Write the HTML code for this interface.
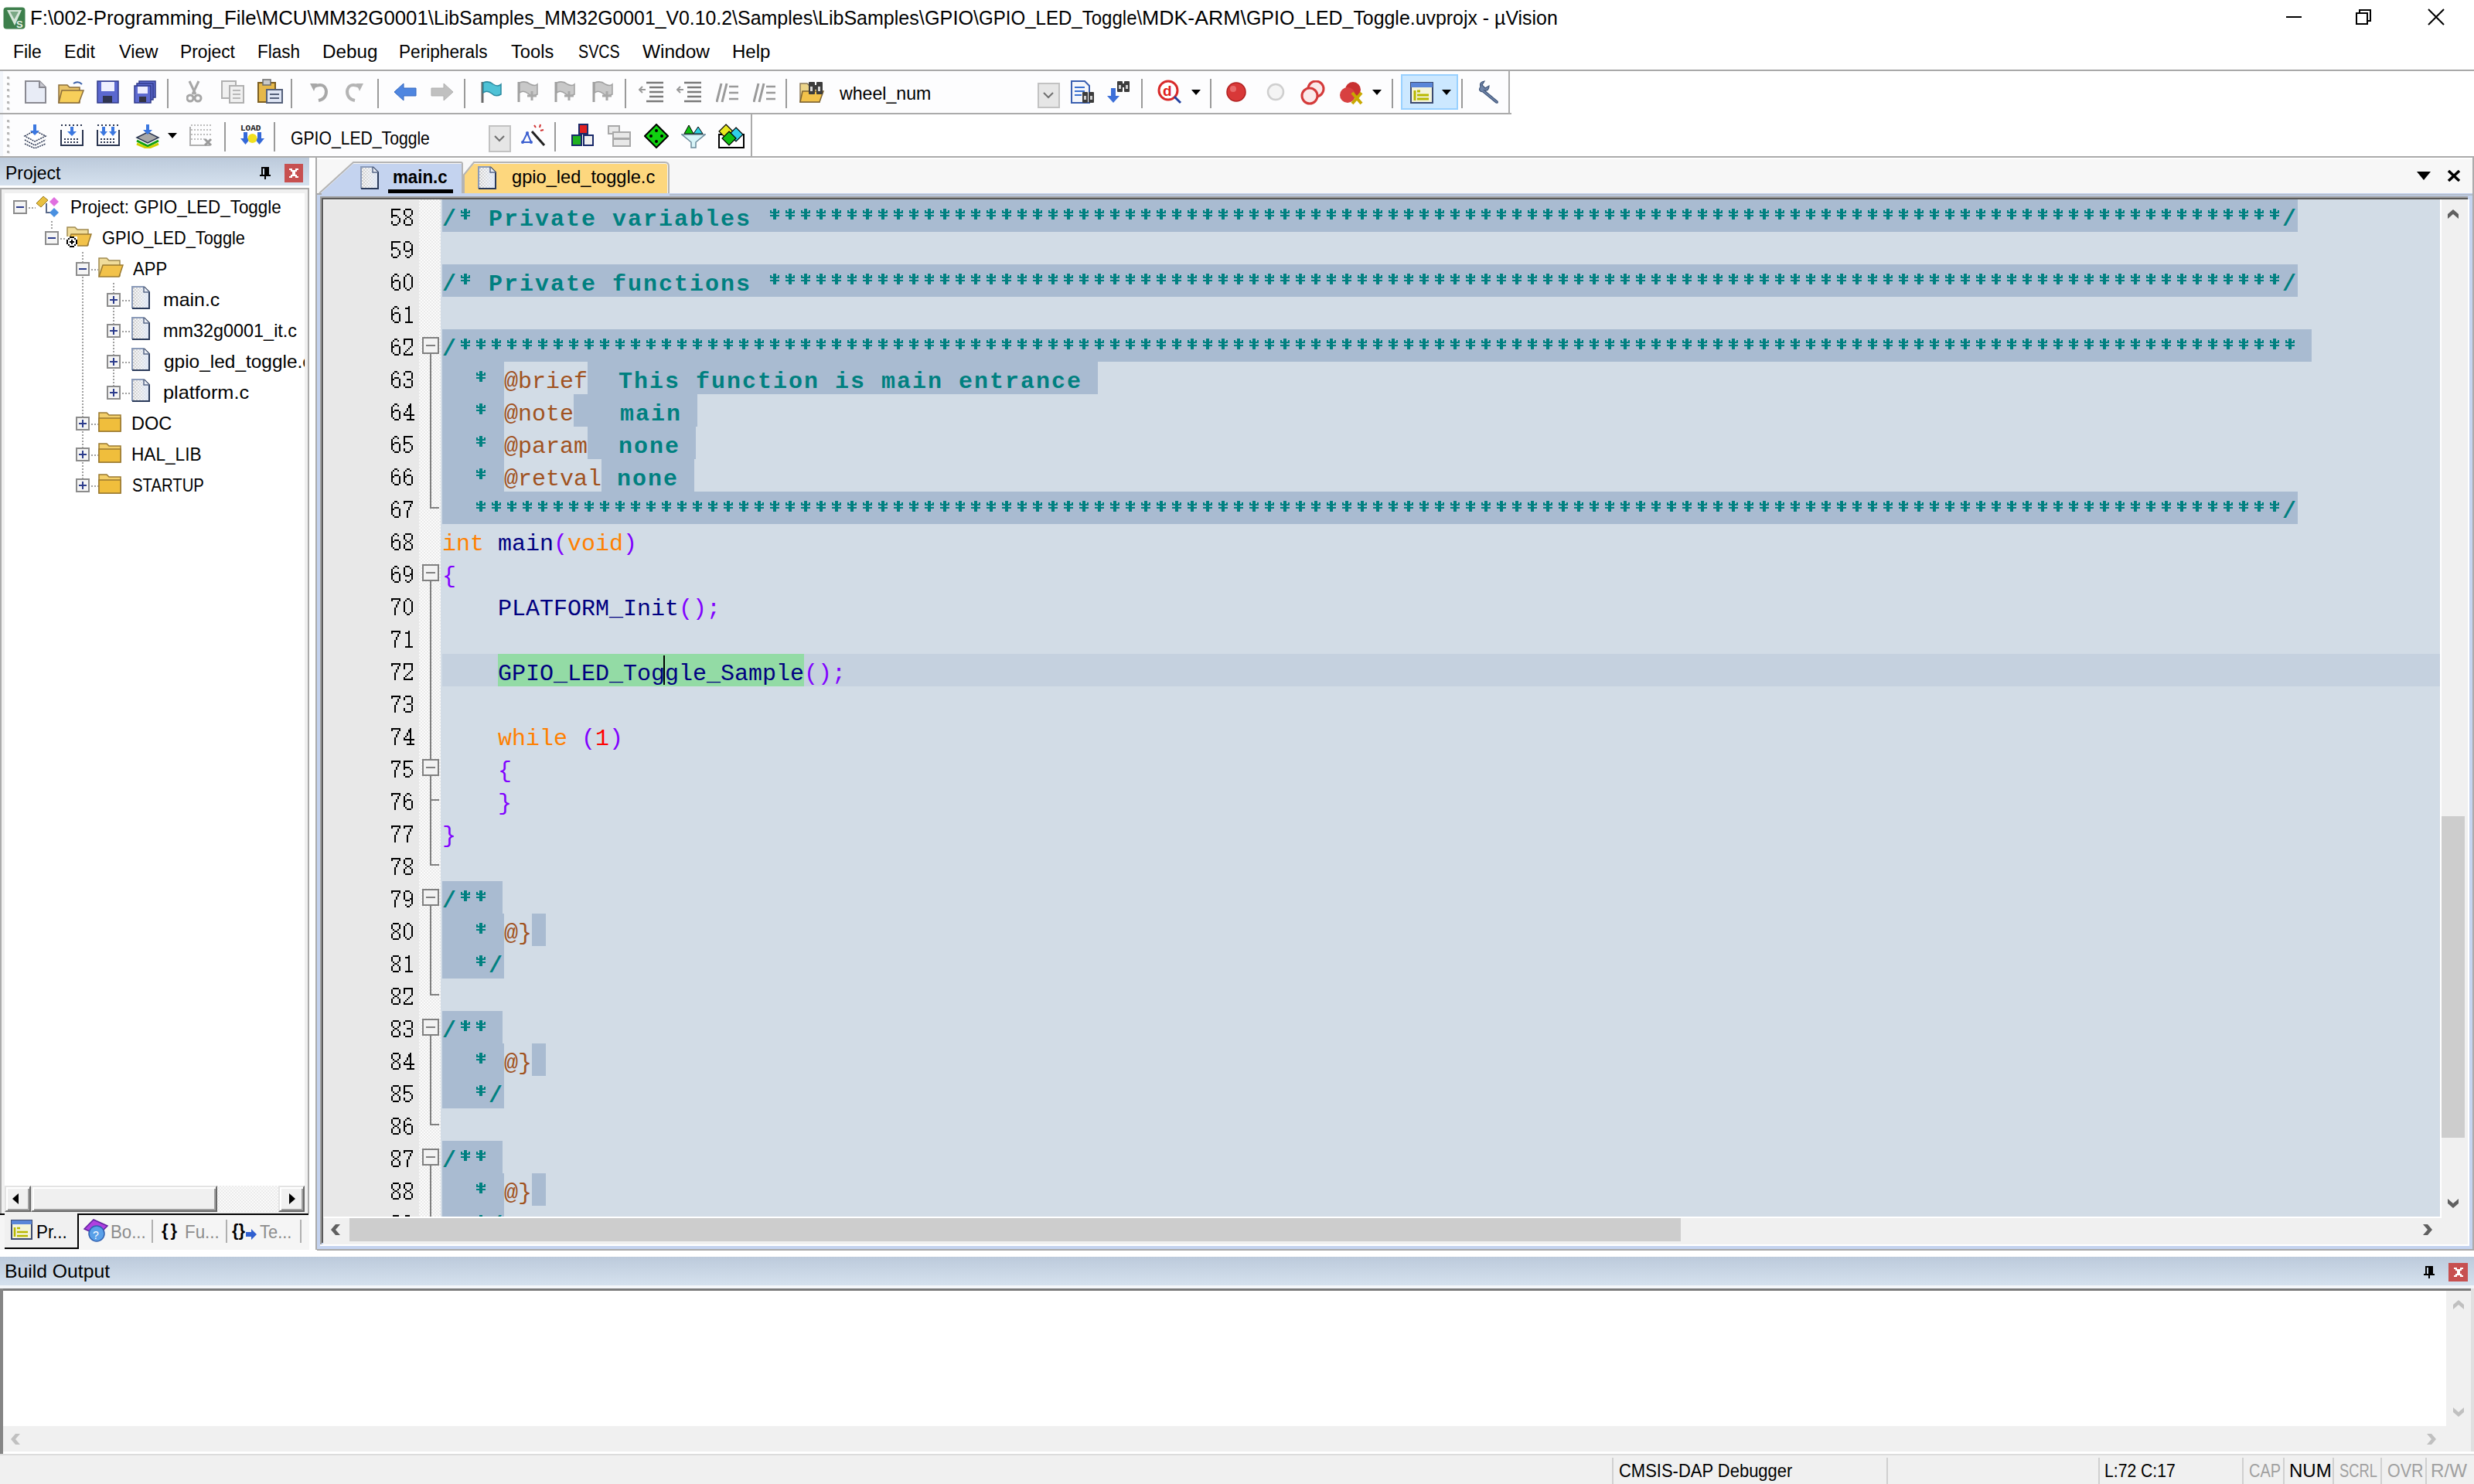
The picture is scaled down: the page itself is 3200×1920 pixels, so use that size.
<!DOCTYPE html><html><head><meta charset="utf-8"><title>uVision</title><style>
*{margin:0;padding:0;box-sizing:border-box}
html,body{width:3200px;height:1920px;overflow:hidden;background:#fff;position:relative}
.t{position:absolute;white-space:pre;font-family:'Liberation Sans',sans-serif;line-height:1}
.m{position:absolute;white-space:pre;font-family:'Liberation Mono',monospace;line-height:42px;height:42px;font-size:30px}
</style></head><body><div id="root" style="position:absolute;left:0;top:0;width:3200px;height:1920px;overflow:hidden">
<svg style="position:absolute;left:4px;top:9px;" width="29" height="29" viewBox="0 0 29 29"><rect x="0.5" y="0.5" width="28" height="28" rx="4" fill="#3d7f4c"/><path d="M5 4 L24 4 L15 24 Z" fill="#e8f2ea" opacity="0.9"/><path d="M9 6 L20 6 L14.5 16 Z" fill="#3d7f4c" opacity="0.6"/><text x="17" y="27" font-family="Liberation Sans" font-size="13" font-weight="bold" fill="#e8f2ea">S</text></svg>
<div class="t" style="left:38.94px;top:9.99px;font-size:26px;color:#000;font-weight:normal;transform:scaleX(0.9924);transform-origin:0 0;">F:\002-Programming_File\MCU\MM32G0001\</div>
<div class="t" style="left:561.02px;top:9.99px;font-size:26px;color:#000;font-weight:normal;transform:scaleX(0.9537);transform-origin:0 0;">LibSamples_MM32G0001_V0.10.2\</div>
<div class="t" style="left:953.88px;top:9.99px;font-size:26px;color:#000;font-weight:normal;transform:scaleX(0.9607);transform-origin:0 0;">Samples\</div>
<div class="t" style="left:1058.0px;top:9.99px;font-size:26px;color:#000;font-weight:normal;transform:scaleX(0.9627);transform-origin:0 0;">LibSamples\</div>
<div class="t" style="left:1195.74px;top:9.99px;font-size:26px;color:#000;font-weight:normal;transform:scaleX(0.9691);transform-origin:0 0;">GPIO\</div>
<div class="t" style="left:1265.8px;top:9.99px;font-size:26px;color:#000;font-weight:normal;transform:scaleX(0.9252);transform-origin:0 0;">GPIO_LED_Toggle\</div>
<div class="t" style="left:1476.87px;top:9.99px;font-size:26px;color:#000;font-weight:normal;transform:scaleX(1.0256);transform-origin:0 0;">MDK-ARM\</div>
<div class="t" style="left:1611.76px;top:9.99px;font-size:26px;color:#000;font-weight:normal;transform:scaleX(0.9576);transform-origin:0 0;">GPIO_LED_Toggle.uvprojx - µVision</div>
<div style="position:absolute;left:2957px;top:21px;width:20px;height:2px;background:#000"></div>
<svg style="position:absolute;left:3046px;top:11px;" width="24" height="22" viewBox="0 0 24 22"><rect x="2" y="6" width="14" height="14" fill="none" stroke="#000" stroke-width="2"/><path d="M6 6 V2 H20 V16 H16" fill="none" stroke="#000" stroke-width="2"/></svg>
<svg style="position:absolute;left:3139px;top:11px;" width="24" height="22" viewBox="0 0 24 22"><path d="M2 1 L22 21 M22 1 L2 21" stroke="#000" stroke-width="2"/></svg>
<div class="t" style="left:16.97px;top:56.28px;font-size:23.3px;color:#000;font-weight:normal;transform:scaleX(0.9793);transform-origin:0 0;">File</div>
<div class="t" style="left:83.15px;top:56.28px;font-size:23.3px;color:#000;font-weight:normal;transform:scaleX(0.9945);transform-origin:0 0;">Edit</div>
<div class="t" style="left:153.6px;top:56.28px;font-size:23.3px;color:#000;font-weight:normal;transform:scaleX(1.0081);transform-origin:0 0;">View</div>
<div class="t" style="left:233.18px;top:56.28px;font-size:23.3px;color:#000;font-weight:normal;transform:scaleX(0.9774);transform-origin:0 0;">Project</div>
<div class="t" style="left:333.2px;top:56.28px;font-size:23.3px;color:#000;font-weight:normal;transform:scaleX(0.9682);transform-origin:0 0;">Flash</div>
<div class="t" style="left:417.06px;top:56.28px;font-size:23.3px;color:#000;font-weight:normal;transform:scaleX(1.0404);transform-origin:0 0;">Debug</div>
<div class="t" style="left:516.19px;top:56.28px;font-size:23.3px;color:#000;font-weight:normal;transform:scaleX(0.9721);transform-origin:0 0;">Peripherals</div>
<div class="t" style="left:660.53px;top:56.28px;font-size:23.3px;color:#000;font-weight:normal;transform:scaleX(1.0165);transform-origin:0 0;">Tools</div>
<div class="t" style="left:747.71px;top:56.28px;font-size:23.3px;color:#000;font-weight:normal;transform:scaleX(0.8470);transform-origin:0 0;">SVCS</div>
<div class="t" style="left:830.7px;top:56.28px;font-size:23.3px;color:#000;font-weight:normal;transform:scaleX(1.0488);transform-origin:0 0;">Window</div>
<div class="t" style="left:946.78px;top:56.28px;font-size:23.3px;color:#000;font-weight:normal;transform:scaleX(1.0314);transform-origin:0 0;">Help</div>
<div style="position:absolute;left:0px;top:90px;width:3200px;height:2px;background:#a9a9a9"></div>
<div style="position:absolute;left:0px;top:92px;width:1953px;height:55px;background:#fdfdfe;border-right:2px solid #ababab"></div>
<div style="position:absolute;left:0px;top:92px;width:4px;height:55px;background:#f2f5fa"></div>
<div style="position:absolute;left:0px;top:146px;width:1955px;height:2px;background:#ababab"></div>
<div style="position:absolute;left:0px;top:148px;width:973px;height:56px;background:#fdfdfe;border-right:2px solid #ababab"></div>
<div style="position:absolute;left:0px;top:148px;width:4px;height:56px;background:#f2f5fa"></div>
<div style="position:absolute;left:0px;top:202px;width:3200px;height:2px;background:#ababab"></div>
<div style="position:absolute;left:9px;top:99px;width:3px;height:3px;background:#b8b8b8;box-shadow:1px 1px #e8e8e8"></div>
<div style="position:absolute;left:9px;top:107px;width:3px;height:3px;background:#b8b8b8;box-shadow:1px 1px #e8e8e8"></div>
<div style="position:absolute;left:9px;top:115px;width:3px;height:3px;background:#b8b8b8;box-shadow:1px 1px #e8e8e8"></div>
<div style="position:absolute;left:9px;top:123px;width:3px;height:3px;background:#b8b8b8;box-shadow:1px 1px #e8e8e8"></div>
<div style="position:absolute;left:9px;top:131px;width:3px;height:3px;background:#b8b8b8;box-shadow:1px 1px #e8e8e8"></div>
<div style="position:absolute;left:9px;top:139px;width:3px;height:3px;background:#b8b8b8;box-shadow:1px 1px #e8e8e8"></div>
<div style="position:absolute;left:9px;top:155px;width:3px;height:3px;background:#b8b8b8;box-shadow:1px 1px #e8e8e8"></div>
<div style="position:absolute;left:9px;top:163px;width:3px;height:3px;background:#b8b8b8;box-shadow:1px 1px #e8e8e8"></div>
<div style="position:absolute;left:9px;top:171px;width:3px;height:3px;background:#b8b8b8;box-shadow:1px 1px #e8e8e8"></div>
<div style="position:absolute;left:9px;top:179px;width:3px;height:3px;background:#b8b8b8;box-shadow:1px 1px #e8e8e8"></div>
<div style="position:absolute;left:9px;top:187px;width:3px;height:3px;background:#b8b8b8;box-shadow:1px 1px #e8e8e8"></div>
<div style="position:absolute;left:9px;top:195px;width:3px;height:3px;background:#b8b8b8;box-shadow:1px 1px #e8e8e8"></div>
<svg style="position:absolute;left:32px;top:104px;" width="28" height="30" viewBox="0 0 28 30"><path d="M1 1 H19 L27 9 V29 H1 Z" fill="#e8ecf6" stroke="#8a8a92" stroke-width="2"/><path d="M19 1 V9 H27" fill="#c8c8d0" stroke="#8a8a92" stroke-width="2"/></svg>
<svg style="position:absolute;left:75px;top:104px;" width="34" height="30" viewBox="0 0 34 30"><path d="M1 6 H12 L15 9 H28 V29 H1 Z" fill="#e9c46a" stroke="#8a6d3b" stroke-width="1.5"/><path d="M5 13 H33 L27 29 H1 Z" fill="#f7cf5a" stroke="#8a6d3b" stroke-width="1.5"/><path d="M20 4 Q26 0 31 5" fill="none" stroke="#3a5fa8" stroke-width="2"/></svg>
<svg style="position:absolute;left:125px;top:104px;" width="30" height="30" viewBox="0 0 30 30"><rect x="1" y="1" width="27" height="28" fill="#5b68cf" stroke="#2f3a8a" stroke-width="1.5"/><rect x="6" y="2" width="17" height="12" fill="#eef0ff"/><rect x="8" y="20" width="12" height="9" fill="#2f3450"/></svg>
<svg style="position:absolute;left:173px;top:104px;" width="30" height="30" viewBox="0 0 30 30"><rect x="7" y="1" width="21" height="21" fill="#5d6ad0" stroke="#2f3a8a" stroke-width="1.5"/><rect x="4" y="4" width="21" height="21" fill="#5d6ad0" stroke="#2f3a8a" stroke-width="1.5"/><rect x="1" y="7" width="21" height="22" fill="#5d6ad0" stroke="#2f3a8a" stroke-width="1.5"/><rect x="5" y="8" width="13" height="9" fill="#eef"/><rect x="7" y="21" width="9" height="7" fill="#334"/></svg>
<div style="position:absolute;left:216px;top:102px;width:2px;height:38px;background:#9a9a9a"></div>
<svg style="position:absolute;left:241px;top:104px;" width="22" height="30" viewBox="0 0 22 30"><path d="M4 1 L12 18 M16 1 L8 18" stroke="#a6a6a6" stroke-width="3"/><circle cx="5" cy="23" r="4" fill="none" stroke="#a6a6a6" stroke-width="3"/><circle cx="15" cy="23" r="4" fill="none" stroke="#a6a6a6" stroke-width="3"/></svg>
<svg style="position:absolute;left:286px;top:104px;" width="32" height="30" viewBox="0 0 32 30"><rect x="1" y="1" width="18" height="22" fill="#f0f0f0" stroke="#b0b0b0" stroke-width="2"/><rect x="11" y="7" width="18" height="22" fill="#f0f0f0" stroke="#b0b0b0" stroke-width="2"/><path d="M15 13 H25 M15 18 H25 M15 23 H25" stroke="#b8b8b8" stroke-width="2"/></svg>
<svg style="position:absolute;left:332px;top:102px;" width="34" height="32" viewBox="0 0 34 32"><rect x="2" y="5" width="22" height="25" fill="#e6b84a" stroke="#7d5f22" stroke-width="2"/><rect x="8" y="1" width="10" height="7" fill="#c9c9c9" stroke="#6c6c6c" stroke-width="1.5"/><rect x="13" y="14" width="20" height="17" fill="#dfe6f5" stroke="#55607a" stroke-width="2"/><path d="M17 20 H29 M17 25 H29" stroke="#55607a" stroke-width="2"/></svg>
<div style="position:absolute;left:376px;top:102px;width:2px;height:38px;background:#9a9a9a"></div>
<svg style="position:absolute;left:400px;top:104px;" width="26" height="30" viewBox="0 0 26 30"><path d="M6 8 Q20 2 22 14 Q22 24 12 26" fill="none" stroke="#a8a8a8" stroke-width="4"/><path d="M1 4 L10 4 L6 14 Z" fill="#a8a8a8"/></svg>
<svg style="position:absolute;left:447px;top:104px;" width="26" height="30" viewBox="0 0 26 30"><path d="M18 8 Q4 2 2 14 Q2 24 12 26" fill="none" stroke="#b4b4b4" stroke-width="4"/><path d="M23 4 L14 4 L18 14 Z" fill="#b4b4b4"/></svg>
<div style="position:absolute;left:488px;top:102px;width:2px;height:38px;background:#9a9a9a"></div>
<svg style="position:absolute;left:509px;top:107px;" width="30" height="24" viewBox="0 0 30 24"><path d="M1 12 L13 1 V7 H29 V17 H13 V23 Z" fill="#4f86e0" stroke="#3468c0" stroke-width="1"/></svg>
<svg style="position:absolute;left:557px;top:107px;" width="30" height="24" viewBox="0 0 30 24"><path d="M29 12 L17 1 V7 H1 V17 H17 V23 Z" fill="#c0c0c0" stroke="#b0b0b0" stroke-width="1"/></svg>
<div style="position:absolute;left:600px;top:102px;width:2px;height:38px;background:#9a9a9a"></div>
<svg style="position:absolute;left:620px;top:104px;" width="30" height="30" viewBox="0 0 30 30"><path d="M4 2 L4 29" stroke="#6a6a6a" stroke-width="3"/><path d="M5 3 Q12 0 18 5 Q24 9 28 5 V18 Q21 22 16 17 Q10 12 5 16 Z" fill="#4fc2d6" stroke="#2b8aa0" stroke-width="1.5"/></svg>
<svg style="position:absolute;left:668px;top:104px;" width="32" height="30" viewBox="0 0 32 30"><path d="M3 2 L3 28" stroke="#a0a0a0" stroke-width="3"/><path d="M4 3 Q12 0 18 5 Q24 8 27 5 V18 Q20 22 15 17 Q9 12 4 16 Z" fill="#c8c8c8" stroke="#a0a0a0" stroke-width="1.5"/><path d="M14 20 H26 M20 14 V26" stroke="#a8a8a8" stroke-width="3"/></svg>
<svg style="position:absolute;left:716px;top:104px;" width="32" height="30" viewBox="0 0 32 30"><path d="M3 2 L3 28" stroke="#a0a0a0" stroke-width="3"/><path d="M4 3 Q12 0 18 5 Q24 8 27 5 V18 Q20 22 15 17 Q9 12 4 16 Z" fill="#c8c8c8" stroke="#a0a0a0" stroke-width="1.5"/><path d="M14 20 H26 M20 14 V26" stroke="#a8a8a8" stroke-width="3"/></svg>
<svg style="position:absolute;left:765px;top:104px;" width="32" height="30" viewBox="0 0 32 30"><path d="M3 2 L3 28" stroke="#a0a0a0" stroke-width="3"/><path d="M4 3 Q12 0 18 5 Q24 8 27 5 V18 Q20 22 15 17 Q9 12 4 16 Z" fill="#c8c8c8" stroke="#a0a0a0" stroke-width="1.5"/><path d="M14 20 H26 M20 14 V26" stroke="#a8a8a8" stroke-width="3"/></svg>
<div style="position:absolute;left:808px;top:102px;width:2px;height:38px;background:#9a9a9a"></div>
<svg style="position:absolute;left:826px;top:104px;" width="34" height="30" viewBox="0 0 34 30"><path d="M10 3 H32 M14 9 H32 M14 15 H32 M14 21 H32 M10 27 H32" stroke="#7a7a7a" stroke-width="2.5"/><path d="M1 12 L9 12 M5 8 L1 12 L5 16" stroke="#9a9a9a" stroke-width="2" fill="none"/></svg>
<svg style="position:absolute;left:875px;top:104px;" width="34" height="30" viewBox="0 0 34 30"><path d="M10 3 H32 M14 9 H32 M14 15 H32 M14 21 H32 M10 27 H32" stroke="#7a7a7a" stroke-width="2.5"/><path d="M1 12 L9 12 M5 8 L1 12 L5 16" stroke="#9a9a9a" stroke-width="2" fill="none"/></svg>
<svg style="position:absolute;left:926px;top:104px;" width="30" height="30" viewBox="0 0 30 30"><path d="M7 4 L1 28 M14 4 L8 28" stroke="#9a9a9a" stroke-width="3"/><path d="M17 8 H29 M17 16 H29 M17 24 H29" stroke="#9a9a9a" stroke-width="2.5"/></svg>
<svg style="position:absolute;left:974px;top:104px;" width="32" height="30" viewBox="0 0 32 30"><path d="M7 4 L1 28 M14 4 L8 28" stroke="#9a9a9a" stroke-width="3"/><path d="M17 8 H29 M17 16 H29 M17 24 H29" stroke="#9a9a9a" stroke-width="2.5"/></svg>
<div style="position:absolute;left:1016px;top:102px;width:2px;height:38px;background:#9a9a9a"></div>
<svg style="position:absolute;left:1034px;top:104px;" width="34" height="30" viewBox="0 0 34 30"><path d="M1 4 H10 L13 7 H26 V28 H1 Z" fill="#ecd58a" stroke="#8a7a5a" stroke-width="1.5"/><path d="M4 14 H31 L26 28 H1 Z" fill="#f2c24a" stroke="#7d6330" stroke-width="1.5"/><rect x="12" y="2" width="8" height="16" rx="1" fill="#3c3c3c"/><rect x="22" y="2" width="8" height="16" rx="1" fill="#3c3c3c"/><rect x="18" y="6" width="6" height="6" fill="#3c3c3c"/><rect x="14" y="8" width="3" height="6" fill="#d8d8d8"/><rect x="24" y="8" width="3" height="6" fill="#d8d8d8"/></svg>
<div class="t" style="left:1086.12px;top:109.35px;font-size:23.8px;color:#000;font-weight:normal;transform:scaleX(0.9725);transform-origin:0 0;">wheel_num</div>
<div style="position:absolute;left:1342px;top:107px;width:29px;height:33px;background:#e6e6e6;border:2px solid #c2c2c2"></div>
<svg style="position:absolute;left:1348px;top:118px;" width="16" height="10" viewBox="0 0 16 10"><path d="M2 2 L8 8 L14 2" fill="none" stroke="#707070" stroke-width="2"/></svg>
<svg style="position:absolute;left:1385px;top:104px;" width="32" height="30" viewBox="0 0 32 30"><path d="M1 1 H18 L24 7 V29 H1 Z" fill="#f4f6fb" stroke="#3a5fb0" stroke-width="2"/><path d="M5 9 H18 M5 14 H18 M5 19 H14" stroke="#3a70d0" stroke-width="2"/><rect x="15" y="15" width="7" height="14" rx="1" fill="#3c3c3c"/><rect x="23" y="15" width="7" height="14" rx="1" fill="#3c3c3c"/><rect x="17" y="20" width="3" height="5" fill="#d0d0d0"/><rect x="25" y="20" width="3" height="5" fill="#d0d0d0"/></svg>
<svg style="position:absolute;left:1431px;top:104px;" width="32" height="30" viewBox="0 0 32 30"><path d="M6 10 V20 H1 L9 29 L17 20 H12 V10 Z" fill="#3c6fd8"/><rect x="14" y="1" width="7" height="14" rx="1" fill="#3c3c3c"/><rect x="23" y="1" width="7" height="14" rx="1" fill="#3c3c3c"/><rect x="19" y="4" width="5" height="5" fill="#3c3c3c"/><rect x="16" y="6" width="3" height="5" fill="#d0d0d0"/><rect x="25" y="6" width="3" height="5" fill="#d0d0d0"/></svg>
<div style="position:absolute;left:1476px;top:102px;width:2px;height:38px;background:#9a9a9a"></div>
<svg style="position:absolute;left:1497px;top:103px;" width="34" height="32" viewBox="0 0 34 32"><circle cx="14" cy="14" r="12" fill="#fff" stroke="#d82a2a" stroke-width="3"/><text x="7" y="21" font-family="Liberation Sans" font-weight="bold" font-size="19" fill="#e02020">d</text><path d="M22 22 L30 30" stroke="#2040a0" stroke-width="3"/></svg>
<svg style="position:absolute;left:1541px;top:116px;" width="12" height="8" viewBox="0 0 12 8"><path d="M0 0 H12 L6 7 Z" fill="#000"/></svg>
<div style="position:absolute;left:1565px;top:102px;width:2px;height:38px;background:#9a9a9a"></div>
<svg style="position:absolute;left:1585px;top:105px;" width="30" height="28" viewBox="0 0 30 28"><circle cx="14" cy="14" r="12" fill="#d83838" stroke="#b02020" stroke-width="1.5"/><circle cx="10" cy="10" r="4" fill="#f08080" opacity="0.7"/></svg>
<svg style="position:absolute;left:1638px;top:107px;" width="26" height="26" viewBox="0 0 26 26"><circle cx="12" cy="12" r="10" fill="#f4f4f4" stroke="#cfcfcf" stroke-width="2.5"/></svg>
<svg style="position:absolute;left:1682px;top:104px;" width="34" height="32" viewBox="0 0 34 32"><circle cx="20" cy="11" r="10" fill="#fbeaea" stroke="#d43a3a" stroke-width="3"/><circle cx="12" cy="20" r="10" fill="#fbeaea" stroke="#d43a3a" stroke-width="3"/></svg>
<svg style="position:absolute;left:1732px;top:104px;" width="34" height="32" viewBox="0 0 34 32"><circle cx="18" cy="12" r="10" fill="#c83030"/><circle cx="11" cy="19" r="10" fill="#d84040"/><path d="M17 16 L29 30 M29 16 L17 30" stroke="#c8a800" stroke-width="4"/></svg>
<svg style="position:absolute;left:1775px;top:116px;" width="12" height="8" viewBox="0 0 12 8"><path d="M0 0 H12 L6 7 Z" fill="#000"/></svg>
<div style="position:absolute;left:1800px;top:102px;width:2px;height:38px;background:#9a9a9a"></div>
<div style="position:absolute;left:1812px;top:96px;width:74px;height:46px;background:#cce8ff;border:2px solid #99d1ff"></div>
<svg style="position:absolute;left:1824px;top:106px;" width="30" height="28" viewBox="0 0 30 28"><rect x="1" y="1" width="28" height="26" fill="#f4f4dc" stroke="#3c4a70" stroke-width="2"/><rect x="1" y="1" width="28" height="6" fill="#5a86d8"/><path d="M6 11 V24 M9 12 H13 M9 17 H24 M9 22 H24" stroke="#b8b800" stroke-width="3"/></svg>
<svg style="position:absolute;left:1865px;top:116px;" width="12" height="8" viewBox="0 0 12 8"><path d="M0 0 H12 L6 7 Z" fill="#000"/></svg>
<div style="position:absolute;left:1890px;top:102px;width:2px;height:38px;background:#9a9a9a"></div>
<svg style="position:absolute;left:1911px;top:104px;" width="32" height="30" viewBox="0 0 32 30"><path d="M4 8 Q2 2 9 1 L6 6 L10 10 L15 7 Q15 14 9 13 L26 27 Q27 30 24 29 L7 15 Q0 14 4 8 Z" fill="#6f84a8" stroke="#3e5478" stroke-width="1.2"/></svg>
<svg style="position:absolute;left:29px;top:160px;" width="32" height="32" viewBox="0 0 32 32"><path d="M3 16 L16 9 L30 16 L16 23 Z" fill="#fff" stroke="#2a3550" stroke-width="1.5" stroke-dasharray="2 1"/><path d="M3 21 L16 28 L30 21" fill="none" stroke="#2a3550" stroke-width="1.5" stroke-dasharray="2 1"/><path d="M3 26 L16 32 L30 26" fill="none" stroke="#2a3550" stroke-width="1.5" stroke-dasharray="2 1"/><path d="M14 1 H18 V9 H22 L16 15 L10 9 H14 Z" fill="#3c78e0"/></svg>
<svg style="position:absolute;left:77px;top:160px;" width="32" height="30" viewBox="0 0 32 30"><path d="M2 2 H30" stroke="#2a3550" stroke-width="2" stroke-dasharray="2 3"/><path d="M2 8 V28 H30 V8" fill="none" stroke="#2a3550" stroke-width="2"/><path d="M6 20 H26 M6 24 H26" stroke="#2a3550" stroke-width="2" stroke-dasharray="2 2"/><path d="M14 4 H18 V10 H22 L16 16 L10 10 H14 Z" fill="#3c78e0"/></svg>
<svg style="position:absolute;left:124px;top:160px;" width="32" height="30" viewBox="0 0 32 30"><path d="M2 2 H30" stroke="#2a3550" stroke-width="2" stroke-dasharray="2 3"/><path d="M2 8 V28 H30 V8" fill="none" stroke="#2a3550" stroke-width="2"/><path d="M6 20 H26 M6 24 H26" stroke="#2a3550" stroke-width="2" stroke-dasharray="2 2"/><path d="M8 4 H12 V10 H15 L10 16 L5 10 H8 Z M20 4 H24 V10 H27 L22 16 L17 10 H20 Z" fill="#3c78e0"/></svg>
<svg style="position:absolute;left:175px;top:160px;" width="32" height="32" viewBox="0 0 32 32"><path d="M2 18 L16 11 L30 18 L16 25 Z" fill="#a8a8a8" stroke="#2a3550" stroke-width="1.5"/><path d="M2 22 L16 29 L30 22" fill="none" stroke="#10a010" stroke-width="3"/><path d="M2 26 L16 32 L30 26" fill="none" stroke="#d0d000" stroke-width="3"/><path d="M14 1 H18 V8 H22 L16 14 L10 8 H14 Z" fill="#3c78e0"/></svg>
<svg style="position:absolute;left:217px;top:172px;" width="12" height="8" viewBox="0 0 12 8"><path d="M0 0 H12 L6 7 Z" fill="#000"/></svg>
<svg style="position:absolute;left:245px;top:160px;" width="32" height="30" viewBox="0 0 32 30"><path d="M2 2 H30 M2 8 H30 M2 14 H30 M2 20 H22" stroke="#bdbdbd" stroke-width="2" stroke-dasharray="2 2"/><path d="M1 4 V28 H26" fill="none" stroke="#b0b0b0" stroke-width="2"/><path d="M20 20 L28 28 M28 20 L20 28" stroke="#9a9a9a" stroke-width="3"/></svg>
<div style="position:absolute;left:290px;top:158px;width:2px;height:38px;background:#9a9a9a"></div>
<svg style="position:absolute;left:310px;top:159px;" width="34" height="32" viewBox="0 0 34 32"><text x="1" y="10" font-family="Liberation Mono" font-weight="bold" font-size="11" fill="#202020">LOAD</text><path d="M5 12 H10 V20 H14 L7.5 28 L1 20 H5 Z M23 12 H28 V20 H32 L25.5 28 L19 20 H23 Z" fill="#3468d8"/><circle cx="16.5" cy="20" r="6" fill="#f0e020"/></svg>
<div style="position:absolute;left:354px;top:158px;width:2px;height:38px;background:#9a9a9a"></div>
<div class="t" style="left:375.94px;top:167.35px;font-size:23.8px;color:#000;font-weight:normal;transform:scaleX(0.8888);transform-origin:0 0;">GPIO_LED_Toggle</div>
<div style="position:absolute;left:632px;top:162px;width:29px;height:35px;background:#e6e6e6;border:2px solid #c2c2c2"></div>
<svg style="position:absolute;left:638px;top:174px;" width="16" height="10" viewBox="0 0 16 10"><path d="M2 2 L8 8 L14 2" fill="none" stroke="#707070" stroke-width="2"/></svg>
<svg style="position:absolute;left:673px;top:160px;" width="34" height="30" viewBox="0 0 34 30"><path d="M15 10 L31 28" stroke="#202020" stroke-width="3"/><path d="M9 12 L3 24 M9 12 L14 24 M3 24 H14" stroke="#3c60d0" stroke-width="2"/><circle cx="9" cy="12" r="2" fill="#3c60d0"/><circle cx="3" cy="24" r="2" fill="#3c60d0"/><circle cx="14" cy="24" r="2" fill="#3c60d0"/><path d="M18 2 L20 5 M26 1 L25 5 M30 8 L26 9" stroke="#d03030" stroke-width="2"/></svg>
<div style="position:absolute;left:717px;top:158px;width:2px;height:38px;background:#9a9a9a"></div>
<svg style="position:absolute;left:739px;top:160px;" width="30" height="30" viewBox="0 0 30 30"><rect x="10" y="1" width="11" height="12" fill="#e02020" stroke="#1a2a6a" stroke-width="2"/><rect x="1" y="15" width="12" height="13" fill="#20b020" stroke="#1a2a6a" stroke-width="2"/><rect x="16" y="15" width="12" height="13" fill="#f0f0f0" stroke="#1a2a6a" stroke-width="2"/></svg>
<svg style="position:absolute;left:785px;top:162px;" width="32" height="28" viewBox="0 0 32 28"><rect x="2" y="1" width="14" height="10" fill="#e8e8e8" stroke="#a8a8a8" stroke-width="2"/><rect x="8" y="9" width="22" height="8" fill="#e8e8e8" stroke="#a8a8a8" stroke-width="2"/><rect x="8" y="18" width="22" height="9" fill="#e8e8e8" stroke="#a8a8a8" stroke-width="2"/></svg>
<svg style="position:absolute;left:833px;top:160px;" width="32" height="32" viewBox="0 0 32 32"><path d="M16 1 L31 16 L16 31 L1 16 Z" fill="#10d010" stroke="#000" stroke-width="2"/><circle cx="16" cy="9" r="2" fill="#000"/><circle cx="9" cy="16" r="2" fill="#000"/><circle cx="23" cy="16" r="2" fill="#000"/><circle cx="16" cy="23" r="2" fill="#000"/></svg>
<svg style="position:absolute;left:881px;top:160px;" width="32" height="32" viewBox="0 0 32 32"><path d="M1 14 H31 L19 24 V31 H13 V24 Z" fill="#d8f4f8" stroke="#6a8a9a" stroke-width="1.5"/><path d="M4 13 L10 2 L16 13 Z" fill="#10c010" stroke="#000" stroke-width="1"/><path d="M16 13 L22 4 L28 13 Z" fill="#30d0e0" stroke="#000" stroke-width="1"/></svg>
<svg style="position:absolute;left:929px;top:160px;" width="34" height="32" viewBox="0 0 34 32"><rect x="1" y="14" width="32" height="17" fill="#fff" stroke="#000" stroke-width="2"/><path d="M10 1 L19 10 L10 19 L1 10 Z" fill="#e8e820" stroke="#000" stroke-width="1.2"/><path d="M23 5 L32 14 L23 23 L14 14 Z" fill="#30d0e8" stroke="#000" stroke-width="1.2"/><path d="M14 10 L23 19 L14 28 L5 19 Z" fill="#10c010" stroke="#000" stroke-width="1.2"/></svg>
<div style="position:absolute;left:0;top:204px;width:400px;height:36px;background:linear-gradient(#bccadb,#d5e1ee)"></div>
<div class="t" style="left:6.57px;top:211.85px;font-size:23.8px;color:#000;font-weight:normal;transform:scaleX(0.9638);transform-origin:0 0;">Project</div>
<svg style="position:absolute;left:336px;top:216px;" width="14" height="16" viewBox="0 0 14 16"><path d="M2 0 H12 V10 H2 Z M4 2 V10 H6 V2 Z" fill="#000" fill-rule="evenodd"/><rect x="0" y="10" width="14" height="2" fill="#000"/><rect x="6" y="12" width="2" height="4" fill="#000"/></svg>
<div style="position:absolute;left:368px;top:212px;width:24px;height:24px;background:#c75050"></div>
<svg style="position:absolute;left:368px;top:212px;" width="24" height="24" viewBox="0 0 24 24"><path d="M6 6 H10 V8 H14 V6 H18 V8 H16 V10 H14 V14 H16 V16 H18 V18 H14 V16 H10 V18 H6 V16 H8 V14 H10 V10 H8 V8 H6 Z" fill="#fff"/></svg>
<div style="position:absolute;left:400px;top:204px;width:10px;height:1413px;background:#fff"></div>
<div style="position:absolute;left:0px;top:243px;width:400px;height:1328px;background:#ababab"></div>
<div style="position:absolute;left:2px;top:245px;width:396px;height:1326px;background:#f0f0f0"></div>
<div style="position:absolute;left:6px;top:250px;width:388px;height:1285px;background:#fff"></div>
<div style="position:absolute;left:0;top:0;width:3200px;height:1920px;clip-path:inset(250px 2806px 385px 6px)">
<svg style="position:absolute;left:17px;top:258.5px;" width="18" height="18" viewBox="0 0 18 18"><rect x="1" y="1" width="16" height="16" fill="#f4f4f4" stroke="#8c8c8c" stroke-width="2"/><path d="M4 9 H14" stroke="#2c3c8c" stroke-width="2"/></svg>
<div style="position:absolute;left:37px;top:267.5px;width:9px;height:2px;background:repeating-linear-gradient(90deg,#a0a0a0 0 2px,transparent 2px 4px)"></div>
<svg style="position:absolute;left:46px;top:252.5px;" width="32" height="30" viewBox="0 0 32 30"><path d="M1 10 L10 1 L16 6 L7 15 Z" fill="#e8c040" stroke="#9a7a20" stroke-width="1"/><path d="M14 10 V22 H20" fill="none" stroke="#5a6a8a" stroke-width="2"/><path d="M24 2 L30 8 L24 14 L18 8 Z" fill="#e070e0"/><path d="M24 16 L30 22 L24 28 L18 22 Z" fill="#4a90e0"/></svg>
<div class="t" style="left:90.81px;top:255.85px;font-size:23.8px;color:#000;font-weight:normal;transform:scaleX(0.9415);transform-origin:0 0;">Project: GPIO_LED_Toggle</div>
<div style="position:absolute;left:66px;top:286px;width:2px;height:12px;background:repeating-linear-gradient(180deg,#a0a0a0 0 2px,transparent 2px 4px)"></div>
<svg style="position:absolute;left:58px;top:298.5px;" width="18" height="18" viewBox="0 0 18 18"><rect x="1" y="1" width="16" height="16" fill="#f4f4f4" stroke="#8c8c8c" stroke-width="2"/><path d="M4 9 H14" stroke="#2c3c8c" stroke-width="2"/></svg>
<div style="position:absolute;left:78px;top:307.5px;width:8px;height:2px;background:repeating-linear-gradient(90deg,#a0a0a0 0 2px,transparent 2px 4px)"></div>
<svg style="position:absolute;left:86px;top:290.5px;" width="33" height="28" viewBox="0 0 33 28"><path d="M1 3 H11 L14 6 H28 V26 H1 Z" fill="#f0dc9a" stroke="#a08a50" stroke-width="1.5"/><path d="M6 12 H32 L27 27 H1 Z" fill="#f2c24a" stroke="#9a7a30" stroke-width="1.5"/></svg>
<svg style="position:absolute;left:86px;top:305.5px;" width="14" height="14" viewBox="0 0 14 14"><rect width="14" height="14" fill="#fff"/><path d="M4 0h6v2h-6z M0 4h2v6h-2z M12 4h2v6h-2z M4 12h6v2h-6z M2 2h2v2h-2z M10 2h2v2h-2z M2 10h2v2h-2z M10 10h2v2h-2z M6 4h2v6h-2z M4 6h6v2h-6z" fill="#000"/></svg>
<div class="t" style="left:131.91px;top:295.85px;font-size:23.8px;color:#000;font-weight:normal;transform:scaleX(0.9137);transform-origin:0 0;">GPIO_LED_Toggle</div>
<div style="position:absolute;left:106px;top:326px;width:2px;height:302px;background:repeating-linear-gradient(180deg,#a0a0a0 0 2px,transparent 2px 4px)"></div>
<svg style="position:absolute;left:98px;top:338.5px;" width="18" height="18" viewBox="0 0 18 18"><rect x="1" y="1" width="16" height="16" fill="#f4f4f4" stroke="#8c8c8c" stroke-width="2"/><path d="M4 9 H14" stroke="#2c3c8c" stroke-width="2"/></svg>
<div style="position:absolute;left:118px;top:347.5px;width:9px;height:2px;background:repeating-linear-gradient(90deg,#a0a0a0 0 2px,transparent 2px 4px)"></div>
<svg style="position:absolute;left:127px;top:330.5px;" width="33" height="28" viewBox="0 0 33 28"><path d="M1 3 H11 L14 6 H28 V26 H1 Z" fill="#f0dc9a" stroke="#a08a50" stroke-width="1.5"/><path d="M6 12 H32 L27 27 H1 Z" fill="#f2c24a" stroke="#9a7a30" stroke-width="1.5"/></svg>
<div class="t" style="left:171.8px;top:335.85px;font-size:23.8px;color:#000;font-weight:normal;transform:scaleX(0.9265);transform-origin:0 0;">APP</div>
<div style="position:absolute;left:146px;top:366px;width:2px;height:142px;background:repeating-linear-gradient(180deg,#a0a0a0 0 2px,transparent 2px 4px)"></div>
<svg style="position:absolute;left:138px;top:378.5px;" width="18" height="18" viewBox="0 0 18 18"><rect x="1" y="1" width="16" height="16" fill="#f4f4f4" stroke="#8c8c8c" stroke-width="2"/><path d="M4 9 H14" stroke="#2c3c8c" stroke-width="2"/><path d="M9 4 V14" stroke="#2c3c8c" stroke-width="2"/></svg>
<div style="position:absolute;left:158px;top:387.5px;width:10px;height:2px;background:repeating-linear-gradient(90deg,#a0a0a0 0 2px,transparent 2px 4px)"></div>
<svg style="position:absolute;left:170px;top:369.5px;" width="24" height="30" viewBox="0 0 24 30"><defs><pattern id="chk" width="4" height="4" patternUnits="userSpaceOnUse"><rect width="4" height="4" fill="#f4f4f4"/><rect width="2" height="2" fill="#c8c8c8"/><rect x="2" y="2" width="2" height="2" fill="#c8c8c8"/></pattern><linearGradient id="fg" x1="0" x2="1"><stop offset="0" stop-color="#fff" stop-opacity="0"/><stop offset="1" stop-color="#dde6f6"/></linearGradient></defs><path d="M1 1 H16 L23 8 V29 H1 Z" fill="url(#chk)"/><path d="M1 1 H16 L23 8 V29 H1 Z" fill="url(#fg)"/><path d="M1 29 V1 H16" fill="none" stroke="#8a9ab8" stroke-width="2"/><path d="M16 1 L23 8 V29 H1" fill="none" stroke="#2a3a5a" stroke-width="2"/><path d="M16 1 V8 H23" fill="#e8ecf4" stroke="#5a6a8a" stroke-width="1.5"/></svg>
<div class="t" style="left:211.38px;top:375.85px;font-size:23.8px;color:#000;font-weight:normal;transform:scaleX(1.0449);transform-origin:0 0;">main.c</div>
<svg style="position:absolute;left:138px;top:418.5px;" width="18" height="18" viewBox="0 0 18 18"><rect x="1" y="1" width="16" height="16" fill="#f4f4f4" stroke="#8c8c8c" stroke-width="2"/><path d="M4 9 H14" stroke="#2c3c8c" stroke-width="2"/><path d="M9 4 V14" stroke="#2c3c8c" stroke-width="2"/></svg>
<div style="position:absolute;left:158px;top:427.5px;width:10px;height:2px;background:repeating-linear-gradient(90deg,#a0a0a0 0 2px,transparent 2px 4px)"></div>
<svg style="position:absolute;left:170px;top:409.5px;" width="24" height="30" viewBox="0 0 24 30"><defs><pattern id="chk" width="4" height="4" patternUnits="userSpaceOnUse"><rect width="4" height="4" fill="#f4f4f4"/><rect width="2" height="2" fill="#c8c8c8"/><rect x="2" y="2" width="2" height="2" fill="#c8c8c8"/></pattern><linearGradient id="fg" x1="0" x2="1"><stop offset="0" stop-color="#fff" stop-opacity="0"/><stop offset="1" stop-color="#dde6f6"/></linearGradient></defs><path d="M1 1 H16 L23 8 V29 H1 Z" fill="url(#chk)"/><path d="M1 1 H16 L23 8 V29 H1 Z" fill="url(#fg)"/><path d="M1 29 V1 H16" fill="none" stroke="#8a9ab8" stroke-width="2"/><path d="M16 1 L23 8 V29 H1" fill="none" stroke="#2a3a5a" stroke-width="2"/><path d="M16 1 V8 H23" fill="#e8ecf4" stroke="#5a6a8a" stroke-width="1.5"/></svg>
<div class="t" style="left:211.48px;top:415.85px;font-size:23.8px;color:#000;font-weight:normal;transform:scaleX(0.9836);transform-origin:0 0;">mm32g0001_it.c</div>
<svg style="position:absolute;left:138px;top:458.5px;" width="18" height="18" viewBox="0 0 18 18"><rect x="1" y="1" width="16" height="16" fill="#f4f4f4" stroke="#8c8c8c" stroke-width="2"/><path d="M4 9 H14" stroke="#2c3c8c" stroke-width="2"/><path d="M9 4 V14" stroke="#2c3c8c" stroke-width="2"/></svg>
<div style="position:absolute;left:158px;top:467.5px;width:10px;height:2px;background:repeating-linear-gradient(90deg,#a0a0a0 0 2px,transparent 2px 4px)"></div>
<svg style="position:absolute;left:170px;top:449.5px;" width="24" height="30" viewBox="0 0 24 30"><defs><pattern id="chk" width="4" height="4" patternUnits="userSpaceOnUse"><rect width="4" height="4" fill="#f4f4f4"/><rect width="2" height="2" fill="#c8c8c8"/><rect x="2" y="2" width="2" height="2" fill="#c8c8c8"/></pattern><linearGradient id="fg" x1="0" x2="1"><stop offset="0" stop-color="#fff" stop-opacity="0"/><stop offset="1" stop-color="#dde6f6"/></linearGradient></defs><path d="M1 1 H16 L23 8 V29 H1 Z" fill="url(#chk)"/><path d="M1 1 H16 L23 8 V29 H1 Z" fill="url(#fg)"/><path d="M1 29 V1 H16" fill="none" stroke="#8a9ab8" stroke-width="2"/><path d="M16 1 L23 8 V29 H1" fill="none" stroke="#2a3a5a" stroke-width="2"/><path d="M16 1 V8 H23" fill="#e8ecf4" stroke="#5a6a8a" stroke-width="1.5"/></svg>
<div class="t" style="left:212.02px;top:455.85px;font-size:23.8px;color:#000;font-weight:normal;transform:scaleX(1.0268);transform-origin:0 0;">gpio_led_toggle.c</div>
<svg style="position:absolute;left:138px;top:498.5px;" width="18" height="18" viewBox="0 0 18 18"><rect x="1" y="1" width="16" height="16" fill="#f4f4f4" stroke="#8c8c8c" stroke-width="2"/><path d="M4 9 H14" stroke="#2c3c8c" stroke-width="2"/><path d="M9 4 V14" stroke="#2c3c8c" stroke-width="2"/></svg>
<div style="position:absolute;left:158px;top:507.5px;width:10px;height:2px;background:repeating-linear-gradient(90deg,#a0a0a0 0 2px,transparent 2px 4px)"></div>
<svg style="position:absolute;left:170px;top:489.5px;" width="24" height="30" viewBox="0 0 24 30"><defs><pattern id="chk" width="4" height="4" patternUnits="userSpaceOnUse"><rect width="4" height="4" fill="#f4f4f4"/><rect width="2" height="2" fill="#c8c8c8"/><rect x="2" y="2" width="2" height="2" fill="#c8c8c8"/></pattern><linearGradient id="fg" x1="0" x2="1"><stop offset="0" stop-color="#fff" stop-opacity="0"/><stop offset="1" stop-color="#dde6f6"/></linearGradient></defs><path d="M1 1 H16 L23 8 V29 H1 Z" fill="url(#chk)"/><path d="M1 1 H16 L23 8 V29 H1 Z" fill="url(#fg)"/><path d="M1 29 V1 H16" fill="none" stroke="#8a9ab8" stroke-width="2"/><path d="M16 1 L23 8 V29 H1" fill="none" stroke="#2a3a5a" stroke-width="2"/><path d="M16 1 V8 H23" fill="#e8ecf4" stroke="#5a6a8a" stroke-width="1.5"/></svg>
<div class="t" style="left:211.48px;top:495.85px;font-size:23.8px;color:#000;font-weight:normal;transform:scaleX(1.0638);transform-origin:0 0;">platform.c</div>
<svg style="position:absolute;left:98px;top:538.5px;" width="18" height="18" viewBox="0 0 18 18"><rect x="1" y="1" width="16" height="16" fill="#f4f4f4" stroke="#8c8c8c" stroke-width="2"/><path d="M4 9 H14" stroke="#2c3c8c" stroke-width="2"/><path d="M9 4 V14" stroke="#2c3c8c" stroke-width="2"/></svg>
<div style="position:absolute;left:118px;top:547.5px;width:9px;height:2px;background:repeating-linear-gradient(90deg,#a0a0a0 0 2px,transparent 2px 4px)"></div>
<svg style="position:absolute;left:127px;top:530.5px;" width="33" height="28" viewBox="0 0 33 28"><path d="M1 3 H11 L14 6 H29 V27 H1 Z" fill="#f3cf6a" stroke="#9a7a30" stroke-width="1.5"/><path d="M1 10 H29 V27 H1 Z" fill="#f0be3c" stroke="#9a7a30" stroke-width="1.5"/></svg>
<div class="t" style="left:169.92px;top:535.85px;font-size:23.8px;color:#000;font-weight:normal;transform:scaleX(0.9880);transform-origin:0 0;">DOC</div>
<svg style="position:absolute;left:98px;top:578.5px;" width="18" height="18" viewBox="0 0 18 18"><rect x="1" y="1" width="16" height="16" fill="#f4f4f4" stroke="#8c8c8c" stroke-width="2"/><path d="M4 9 H14" stroke="#2c3c8c" stroke-width="2"/><path d="M9 4 V14" stroke="#2c3c8c" stroke-width="2"/></svg>
<div style="position:absolute;left:118px;top:587.5px;width:9px;height:2px;background:repeating-linear-gradient(90deg,#a0a0a0 0 2px,transparent 2px 4px)"></div>
<svg style="position:absolute;left:127px;top:570.5px;" width="33" height="28" viewBox="0 0 33 28"><path d="M1 3 H11 L14 6 H29 V27 H1 Z" fill="#f3cf6a" stroke="#9a7a30" stroke-width="1.5"/><path d="M1 10 H29 V27 H1 Z" fill="#f0be3c" stroke="#9a7a30" stroke-width="1.5"/></svg>
<div class="t" style="left:169.99px;top:575.85px;font-size:23.8px;color:#000;font-weight:normal;transform:scaleX(0.9511);transform-origin:0 0;">HAL_LIB</div>
<svg style="position:absolute;left:98px;top:618.5px;" width="18" height="18" viewBox="0 0 18 18"><rect x="1" y="1" width="16" height="16" fill="#f4f4f4" stroke="#8c8c8c" stroke-width="2"/><path d="M4 9 H14" stroke="#2c3c8c" stroke-width="2"/><path d="M9 4 V14" stroke="#2c3c8c" stroke-width="2"/></svg>
<div style="position:absolute;left:118px;top:627.5px;width:9px;height:2px;background:repeating-linear-gradient(90deg,#a0a0a0 0 2px,transparent 2px 4px)"></div>
<svg style="position:absolute;left:127px;top:610.5px;" width="33" height="28" viewBox="0 0 33 28"><path d="M1 3 H11 L14 6 H29 V27 H1 Z" fill="#f3cf6a" stroke="#9a7a30" stroke-width="1.5"/><path d="M1 10 H29 V27 H1 Z" fill="#f0be3c" stroke="#9a7a30" stroke-width="1.5"/></svg>
<div class="t" style="left:170.89px;top:615.85px;font-size:23.8px;color:#000;font-weight:normal;transform:scaleX(0.8535);transform-origin:0 0;">STARTUP</div>
</div>
<div style="position:absolute;left:6px;top:1534px;width:388px;height:34px;background:repeating-conic-gradient(#ececec 0 25%,#fafafa 0 50%) 0 0/4px 4px"></div>
<div style="position:absolute;left:6px;top:1534px;width:34px;height:34px;background:#f0f0f0;border-top:2px solid #e3e3e3;border-left:2px solid #e3e3e3;border-right:2px solid #696969;border-bottom:2px solid #696969;box-shadow:inset 2px 2px #fff, inset -2px -2px #a0a0a0"></div>
<svg style="position:absolute;left:16px;top:1544px;" width="10" height="14" viewBox="0 0 10 14"><path d="M8 0 V14 L0 7 Z" fill="#000"/></svg>
<div style="position:absolute;left:40px;top:1534px;width:241px;height:34px;background:#f0f0f0;border-top:2px solid #e3e3e3;border-left:2px solid #e3e3e3;border-right:2px solid #696969;border-bottom:2px solid #696969;box-shadow:inset 2px 2px #fff, inset -2px -2px #a0a0a0"></div>
<div style="position:absolute;left:360px;top:1534px;width:34px;height:34px;background:#f0f0f0;border-top:2px solid #e3e3e3;border-left:2px solid #e3e3e3;border-right:2px solid #696969;border-bottom:2px solid #696969;box-shadow:inset 2px 2px #fff, inset -2px -2px #a0a0a0"></div>
<svg style="position:absolute;left:374px;top:1544px;" width="10" height="14" viewBox="0 0 10 14"><path d="M0 0 V14 L8 7 Z" fill="#000"/></svg>
<div style="position:absolute;left:0px;top:1570px;width:400px;height:47px;background:#f5f5f5"></div>
<div style="position:absolute;left:0px;top:1570px;width:6px;height:2px;background:#000"></div>
<div style="position:absolute;left:101px;top:1570px;width:298px;height:2px;background:#000"></div>
<div style="position:absolute;left:6px;top:1570px;width:96px;height:46px;background:#f0f0f0;border-right:2px solid #000;border-bottom:2px solid #000"></div>
<svg style="position:absolute;left:14px;top:1578px;" width="28" height="26" viewBox="0 0 28 26"><rect x="1" y="1" width="26" height="24" fill="#f4f4dc" stroke="#3c4a70" stroke-width="2"/><rect x="1" y="1" width="26" height="5" fill="#5a86d8"/><path d="M5 10 V22 M8 11 H12 M8 16 H22 M8 21 H22" stroke="#b8b800" stroke-width="2.5"/></svg>
<div class="t" style="left:46.71px;top:1581.85px;font-size:23.8px;color:#000;font-weight:normal;transform:scaleX(0.9395);transform-origin:0 0;">Pr...</div>
<svg style="position:absolute;left:107px;top:1576px;" width="34" height="32" viewBox="0 0 34 32"><path d="M2 14 L14 2 L32 10 L20 22 Z" fill="#b040e0" stroke="#6020a0" stroke-width="1.5"/><circle cx="18" cy="20" r="10" fill="#5aa0e8" stroke="#3060b0" stroke-width="1.5"/><text x="13" y="27" font-family="Liberation Sans" font-size="14" fill="#fff">?</text></svg>
<div class="t" style="left:143.22px;top:1581.85px;font-size:23.8px;color:#8c8c8c;font-weight:normal;transform:scaleX(0.9337);transform-origin:0 0;">Bo...</div>
<div style="position:absolute;left:196px;top:1578px;width:2px;height:30px;background:#b0b0b0"></div>
<div class="t" style="left:209px;top:1581.38px;font-size:22px;color:#000;font-weight:bold;letter-spacing:3px">{}</div>
<div class="t" style="left:239.21px;top:1581.85px;font-size:23.8px;color:#8c8c8c;font-weight:normal;transform:scaleX(0.9388);transform-origin:0 0;">Fu...</div>
<div style="position:absolute;left:292px;top:1578px;width:2px;height:30px;background:#b0b0b0"></div>
<div class="t" style="left:300px;top:1581.38px;font-size:22px;color:#000;font-weight:bold;">{}</div>
<svg style="position:absolute;left:317px;top:1590px;" width="16" height="14" viewBox="0 0 16 14"><path d="M1 4 H8 V0 L15 7 L8 14 V10 H1 Z" fill="#3060d0"/></svg>
<div class="t" style="left:335.56px;top:1581.85px;font-size:23.8px;color:#8c8c8c;font-weight:normal;transform:scaleX(0.9206);transform-origin:0 0;">Te...</div>
<div style="position:absolute;left:388px;top:1578px;width:2px;height:30px;background:#b0b0b0"></div>
<div style="position:absolute;left:408px;top:204px;width:2px;height:1413px;background:#ababab"></div>
<div style="position:absolute;left:410px;top:204px;width:2790px;height:46px;background:#f7f7f7"></div>
<div style="position:absolute;left:410px;top:204px;width:2790px;height:2px;background:#ffffff"></div>
<div style="position:absolute;left:3198px;top:204px;width:2px;height:1413px;background:#ababab"></div>
<div style="position:absolute;left:410px;top:250px;width:2788px;height:1366px;background:#c4d3ef"></div>
<div style="position:absolute;left:410px;top:1616px;width:2790px;height:2px;background:#a8a8a8"></div>
<svg style="position:absolute;left:410px;top:204px;" width="470" height="48" viewBox="0 0 470 48"><path d="M5 46 L47 8 H187 V46 Z" fill="#c4d3ef"/><path d="M3 46 L47 6 H186 Q188 6 188 8 V46" fill="none" stroke="#b4b4b4" stroke-width="2"/><path d="M190 46 V22 L203 8 H451 Q453 8 453 10 V46 Z" fill="#fdd77e"/><path d="M190 46 V22 L203 6 H450 Q455 6 455 11 V46" fill="none" stroke="#b4b4b4" stroke-width="2"/></svg>
<svg style="position:absolute;left:466px;top:215px;" width="24" height="30" viewBox="0 0 24 30"><defs><pattern id="chk" width="4" height="4" patternUnits="userSpaceOnUse"><rect width="4" height="4" fill="#f4f4f4"/><rect width="2" height="2" fill="#c8c8c8"/><rect x="2" y="2" width="2" height="2" fill="#c8c8c8"/></pattern><linearGradient id="fg" x1="0" x2="1"><stop offset="0" stop-color="#fff" stop-opacity="0"/><stop offset="1" stop-color="#dde6f6"/></linearGradient></defs><path d="M1 1 H16 L23 8 V29 H1 Z" fill="url(#chk)"/><path d="M1 1 H16 L23 8 V29 H1 Z" fill="url(#fg)"/><path d="M1 29 V1 H16" fill="none" stroke="#8a9ab8" stroke-width="2"/><path d="M16 1 L23 8 V29 H1" fill="none" stroke="#2a3a5a" stroke-width="2"/><path d="M16 1 V8 H23" fill="#e8ecf4" stroke="#5a6a8a" stroke-width="1.5"/></svg>
<div class="t" style="left:508.05px;top:217.35px;font-size:23.8px;color:#000;font-weight:bold;transform:scaleX(0.9360);transform-origin:0 0;">main.c</div>
<div style="position:absolute;left:502px;top:245px;width:84px;height:5px;background:#000"></div>
<svg style="position:absolute;left:618px;top:215px;" width="24" height="30" viewBox="0 0 24 30"><defs><pattern id="chk" width="4" height="4" patternUnits="userSpaceOnUse"><rect width="4" height="4" fill="#f4f4f4"/><rect width="2" height="2" fill="#c8c8c8"/><rect x="2" y="2" width="2" height="2" fill="#c8c8c8"/></pattern><linearGradient id="fg" x1="0" x2="1"><stop offset="0" stop-color="#fff" stop-opacity="0"/><stop offset="1" stop-color="#dde6f6"/></linearGradient></defs><path d="M1 1 H16 L23 8 V29 H1 Z" fill="url(#chk)"/><path d="M1 1 H16 L23 8 V29 H1 Z" fill="url(#fg)"/><path d="M1 29 V1 H16" fill="none" stroke="#8a9ab8" stroke-width="2"/><path d="M16 1 L23 8 V29 H1" fill="none" stroke="#2a3a5a" stroke-width="2"/><path d="M16 1 V8 H23" fill="#e8ecf4" stroke="#5a6a8a" stroke-width="1.5"/></svg>
<div class="t" style="left:661.85px;top:217.35px;font-size:23.8px;color:#000;font-weight:normal;transform:scaleX(0.9927);transform-origin:0 0;">gpio_led_toggle.c</div>
<svg style="position:absolute;left:3126px;top:222px;" width="18" height="12" viewBox="0 0 18 12"><path d="M0 0 H18 L9 11 Z" fill="#000"/></svg>
<svg style="position:absolute;left:3165px;top:220px;" width="18" height="15" viewBox="0 0 18 15"><path d="M2 1 L16 14 M16 1 L2 14" stroke="#000" stroke-width="3.5"/></svg>
<div style="position:absolute;left:414px;top:254px;width:2778px;height:2px;background:#a0a0a0"></div>
<div style="position:absolute;left:414px;top:254px;width:2px;height:1356px;background:#a0a0a0"></div>
<div style="position:absolute;left:416px;top:256px;width:2776px;height:2px;background:#5a5a5a"></div>
<div style="position:absolute;left:416px;top:256px;width:2px;height:1352px;background:#5a5a5a"></div>
<div style="position:absolute;left:410px;top:250px;width:6px;height:2px;background:#a9a9a9"></div>
<div style="position:absolute;left:866px;top:251px;width:2332px;height:2px;background:#b2bccc"></div>
<div style="position:absolute;left:418px;top:258px;width:124px;height:1316px;background:#e8e8e8"></div>
<div style="position:absolute;left:418px;top:258px;width:124px;height:1px;background:#f8f8f8"></div>
<div style="position:absolute;left:418px;top:258px;width:1px;height:1316px;background:#f8f8f8"></div>
<div style="position:absolute;left:542px;top:258px;width:28px;height:1316px;background:repeating-conic-gradient(#ebebeb 0 25%,#fbfbfb 0 50%) 0 0/4px 4px"></div>
<div style="position:absolute;left:570px;top:258px;width:2586px;height:1316px;background:#d2dce6"></div>
<div style="position:absolute;left:3157px;top:258px;width:35px;height:1352px;background:#f0f0f0"></div>
<div style="position:absolute;left:3156px;top:258px;width:2px;height:1318px;background:#fff"></div>
<div style="position:absolute;left:3158px;top:1056px;width:30px;height:416px;background:#cdcdcd"></div>
<svg style="position:absolute;left:3166px;top:271px;" width="14" height="12" viewBox="0 0 14 12"><polygon points="0,12 0,6.0 7.0,0 14,6.0 14,12 7.0,6.0" fill="#606060"/></svg>
<svg style="position:absolute;left:3166px;top:1551px;" width="14" height="12" viewBox="0 0 14 12"><polygon points="0,0 7.0,6.0 14,0 14,6.0 7.0,12 0,6.0" fill="#606060"/></svg>
<div style="position:absolute;left:418px;top:1574px;width:2739px;height:2px;background:#fff"></div>
<div style="position:absolute;left:418px;top:1576px;width:2739px;height:34px;background:#f0f0f0"></div>
<div style="position:absolute;left:452px;top:1576px;width:1722px;height:30px;background:#cdcdcd"></div>
<svg style="position:absolute;left:428px;top:1584px;" width="12" height="14" viewBox="0 0 12 14"><polygon points="6.0,0 12,0 6.0,7.0 12,14 6.0,14 0,7.0" fill="#606060"/></svg>
<svg style="position:absolute;left:3134px;top:1584px;" width="12" height="14" viewBox="0 0 12 14"><polygon points="0,0 6.0,0 12,7.0 6.0,14 0,14 6.0,7.0" fill="#606060"/></svg>
<div style="position:absolute;left:414px;top:1610px;width:2779px;height:2px;background:#fff"></div>
<div style="position:absolute;left:3192px;top:258px;width:2px;height:1354px;background:#fff"></div>
<div style="position:absolute;left:0;top:0;width:3200px;height:1920px;clip-path:inset(258px 44px 346px 418px)">
<div style="position:absolute;left:572px;top:258px;width:2400px;height:42px;background:#a9bbd1"></div>
<div style="position:absolute;left:572px;top:342px;width:2400px;height:42px;background:#a9bbd1"></div>
<div style="position:absolute;left:572px;top:426px;width:2418px;height:42px;background:#a9bbd1"></div>
<div style="position:absolute;left:572px;top:468px;width:80px;height:42px;background:#a9bbd1"></div>
<div style="position:absolute;left:652px;top:468px;width:108px;height:42px;background:#d2dce6"></div>
<div style="position:absolute;left:760px;top:468px;width:660px;height:42px;background:#a9bbd1"></div>
<div style="position:absolute;left:572px;top:510px;width:80px;height:42px;background:#a9bbd1"></div>
<div style="position:absolute;left:652px;top:510px;width:90px;height:42px;background:#d2dce6"></div>
<div style="position:absolute;left:742px;top:510px;width:160px;height:42px;background:#a9bbd1"></div>
<div style="position:absolute;left:572px;top:552px;width:80px;height:42px;background:#a9bbd1"></div>
<div style="position:absolute;left:652px;top:552px;width:108px;height:42px;background:#d2dce6"></div>
<div style="position:absolute;left:760px;top:552px;width:140px;height:42px;background:#a9bbd1"></div>
<div style="position:absolute;left:572px;top:594px;width:80px;height:42px;background:#a9bbd1"></div>
<div style="position:absolute;left:652px;top:594px;width:126px;height:42px;background:#d2dce6"></div>
<div style="position:absolute;left:778px;top:594px;width:120px;height:42px;background:#a9bbd1"></div>
<div style="position:absolute;left:572px;top:636px;width:2400px;height:42px;background:#a9bbd1"></div>
<div style="position:absolute;left:572px;top:846px;width:2584px;height:42px;background:#c5d1df"></div>
<div style="position:absolute;left:644px;top:846px;width:396px;height:42px;background:#93dba5"></div>
<div style="position:absolute;left:572px;top:1140px;width:78px;height:42px;background:#a9bbd1"></div>
<div style="position:absolute;left:572px;top:1182px;width:80px;height:42px;background:#a9bbd1"></div>
<div style="position:absolute;left:652px;top:1182px;width:36px;height:42px;background:#d2dce6"></div>
<div style="position:absolute;left:688px;top:1182px;width:18px;height:42px;background:#a9bbd1"></div>
<div style="position:absolute;left:572px;top:1224px;width:80px;height:42px;background:#a9bbd1"></div>
<div style="position:absolute;left:572px;top:1308px;width:78px;height:42px;background:#a9bbd1"></div>
<div style="position:absolute;left:572px;top:1350px;width:80px;height:42px;background:#a9bbd1"></div>
<div style="position:absolute;left:652px;top:1350px;width:36px;height:42px;background:#d2dce6"></div>
<div style="position:absolute;left:688px;top:1350px;width:18px;height:42px;background:#a9bbd1"></div>
<div style="position:absolute;left:572px;top:1392px;width:80px;height:42px;background:#a9bbd1"></div>
<div style="position:absolute;left:572px;top:1476px;width:78px;height:42px;background:#a9bbd1"></div>
<div style="position:absolute;left:572px;top:1518px;width:80px;height:42px;background:#a9bbd1"></div>
<div style="position:absolute;left:652px;top:1518px;width:36px;height:42px;background:#d2dce6"></div>
<div style="position:absolute;left:688px;top:1518px;width:18px;height:42px;background:#a9bbd1"></div>
<div style="position:absolute;left:572px;top:1560px;width:80px;height:42px;background:#a9bbd1"></div>
<div class="m" style="left:572px;top:263px;color:#008080;letter-spacing:2px;font-weight:bold;">/</div>
<svg style="position:absolute;left:592px;top:258px;" width="20" height="42" viewBox="0 0 20 42"><defs><pattern id="ap58_592" width="20" height="42" patternUnits="userSpaceOnUse"><path d="M8 12h4v2h-4z M4 14h2v2h-2z M8 14h4v2h-4z M14 14h2v2h-2z M4 16h12v2h-12z M8 18h4v2h-4z M4 20h12v2h-12z M8 22h4v4h-4z" fill="#008080"/></pattern></defs><rect width="20" height="42" fill="url(#ap58_592)"/></svg>
<div class="m" style="left:612px;top:263px;color:#008080;letter-spacing:2px;font-weight:bold;"> Private variables </div>
<svg style="position:absolute;left:992px;top:258px;" width="1960" height="42" viewBox="0 0 1960 42"><defs><pattern id="ap58_992" width="20" height="42" patternUnits="userSpaceOnUse"><path d="M8 12h4v2h-4z M4 14h2v2h-2z M8 14h4v2h-4z M14 14h2v2h-2z M4 16h12v2h-12z M8 18h4v2h-4z M4 20h12v2h-12z M8 22h4v4h-4z" fill="#008080"/></pattern></defs><rect width="1960" height="42" fill="url(#ap58_992)"/></svg>
<div class="m" style="left:2952px;top:263px;color:#008080;letter-spacing:2px;font-weight:bold;">/</div>
<div class="m" style="left:572px;top:347px;color:#008080;letter-spacing:2px;font-weight:bold;">/</div>
<svg style="position:absolute;left:592px;top:342px;" width="20" height="42" viewBox="0 0 20 42"><defs><pattern id="ap60_592" width="20" height="42" patternUnits="userSpaceOnUse"><path d="M8 12h4v2h-4z M4 14h2v2h-2z M8 14h4v2h-4z M14 14h2v2h-2z M4 16h12v2h-12z M8 18h4v2h-4z M4 20h12v2h-12z M8 22h4v4h-4z" fill="#008080"/></pattern></defs><rect width="20" height="42" fill="url(#ap60_592)"/></svg>
<div class="m" style="left:612px;top:347px;color:#008080;letter-spacing:2px;font-weight:bold;"> Private functions </div>
<svg style="position:absolute;left:992px;top:342px;" width="1960" height="42" viewBox="0 0 1960 42"><defs><pattern id="ap60_992" width="20" height="42" patternUnits="userSpaceOnUse"><path d="M8 12h4v2h-4z M4 14h2v2h-2z M8 14h4v2h-4z M14 14h2v2h-2z M4 16h12v2h-12z M8 18h4v2h-4z M4 20h12v2h-12z M8 22h4v4h-4z" fill="#008080"/></pattern></defs><rect width="1960" height="42" fill="url(#ap60_992)"/></svg>
<div class="m" style="left:2952px;top:347px;color:#008080;letter-spacing:2px;font-weight:bold;">/</div>
<div class="m" style="left:572px;top:431px;color:#008080;letter-spacing:2px;font-weight:bold;">/</div>
<svg style="position:absolute;left:592px;top:426px;" width="2380" height="42" viewBox="0 0 2380 42"><defs><pattern id="ap62_592" width="20" height="42" patternUnits="userSpaceOnUse"><path d="M8 12h4v2h-4z M4 14h2v2h-2z M8 14h4v2h-4z M14 14h2v2h-2z M4 16h12v2h-12z M8 18h4v2h-4z M4 20h12v2h-12z M8 22h4v4h-4z" fill="#008080"/></pattern></defs><rect width="2380" height="42" fill="url(#ap62_592)"/></svg>
<svg style="position:absolute;left:612px;top:468px;" width="20" height="42" viewBox="0 0 20 42"><defs><pattern id="ap63_612" width="20" height="42" patternUnits="userSpaceOnUse"><path d="M8 12h4v2h-4z M4 14h2v2h-2z M8 14h4v2h-4z M14 14h2v2h-2z M4 16h12v2h-12z M8 18h4v2h-4z M4 20h12v2h-12z M8 22h4v4h-4z" fill="#008080"/></pattern></defs><rect width="20" height="42" fill="url(#ap63_612)"/></svg>
<div class="m" style="left:652px;top:473px;color:#a0521e;">@brief</div>
<div class="m" style="left:760px;top:473px;color:#008080;letter-spacing:2px;font-weight:bold;">  This function is main entrance</div>
<svg style="position:absolute;left:612px;top:510px;" width="20" height="42" viewBox="0 0 20 42"><defs><pattern id="ap64_612" width="20" height="42" patternUnits="userSpaceOnUse"><path d="M8 12h4v2h-4z M4 14h2v2h-2z M8 14h4v2h-4z M14 14h2v2h-2z M4 16h12v2h-12z M8 18h4v2h-4z M4 20h12v2h-12z M8 22h4v4h-4z" fill="#008080"/></pattern></defs><rect width="20" height="42" fill="url(#ap64_612)"/></svg>
<div class="m" style="left:652px;top:515px;color:#a0521e;">@note</div>
<div class="m" style="left:742px;top:515px;color:#008080;letter-spacing:2px;font-weight:bold;">   main</div>
<svg style="position:absolute;left:612px;top:552px;" width="20" height="42" viewBox="0 0 20 42"><defs><pattern id="ap65_612" width="20" height="42" patternUnits="userSpaceOnUse"><path d="M8 12h4v2h-4z M4 14h2v2h-2z M8 14h4v2h-4z M14 14h2v2h-2z M4 16h12v2h-12z M8 18h4v2h-4z M4 20h12v2h-12z M8 22h4v4h-4z" fill="#008080"/></pattern></defs><rect width="20" height="42" fill="url(#ap65_612)"/></svg>
<div class="m" style="left:652px;top:557px;color:#a0521e;">@param</div>
<div class="m" style="left:760px;top:557px;color:#008080;letter-spacing:2px;font-weight:bold;">  none</div>
<svg style="position:absolute;left:612px;top:594px;" width="20" height="42" viewBox="0 0 20 42"><defs><pattern id="ap66_612" width="20" height="42" patternUnits="userSpaceOnUse"><path d="M8 12h4v2h-4z M4 14h2v2h-2z M8 14h4v2h-4z M14 14h2v2h-2z M4 16h12v2h-12z M8 18h4v2h-4z M4 20h12v2h-12z M8 22h4v4h-4z" fill="#008080"/></pattern></defs><rect width="20" height="42" fill="url(#ap66_612)"/></svg>
<div class="m" style="left:652px;top:599px;color:#a0521e;">@retval</div>
<div class="m" style="left:778px;top:599px;color:#008080;letter-spacing:2px;font-weight:bold;"> none</div>
<svg style="position:absolute;left:612px;top:636px;" width="2340" height="42" viewBox="0 0 2340 42"><defs><pattern id="ap67_612" width="20" height="42" patternUnits="userSpaceOnUse"><path d="M8 12h4v2h-4z M4 14h2v2h-2z M8 14h4v2h-4z M14 14h2v2h-2z M4 16h12v2h-12z M8 18h4v2h-4z M4 20h12v2h-12z M8 22h4v4h-4z" fill="#008080"/></pattern></defs><rect width="2340" height="42" fill="url(#ap67_612)"/></svg>
<div class="m" style="left:2952px;top:641px;color:#008080;letter-spacing:2px;font-weight:bold;">/</div>
<div class="m" style="left:572px;top:683px;color:#ff8000;">int</div>
<div class="m" style="left:644px;top:683px;color:#000080;">main</div>
<div class="m" style="left:716px;top:683px;color:#8000ff;">(</div>
<div class="m" style="left:734px;top:683px;color:#ff8000;">void</div>
<div class="m" style="left:806px;top:683px;color:#8000ff;">)</div>
<div class="m" style="left:572px;top:725px;color:#8000ff;">{</div>
<div class="m" style="left:644px;top:767px;color:#000080;">PLATFORM_Init</div>
<div class="m" style="left:878px;top:767px;color:#8000ff;">();</div>
<div class="m" style="left:644px;top:851px;color:#000080;">GPIO_LED_Toggle_Sample</div>
<div class="m" style="left:1040px;top:851px;color:#8000ff;">();</div>
<div class="m" style="left:644px;top:935px;color:#ff8000;">while</div>
<div class="m" style="left:752px;top:935px;color:#8000ff;">(</div>
<div class="m" style="left:770px;top:935px;color:#ff0000;">1</div>
<div class="m" style="left:788px;top:935px;color:#8000ff;">)</div>
<div class="m" style="left:644px;top:977px;color:#8000ff;">{</div>
<div class="m" style="left:644px;top:1019px;color:#8000ff;">}</div>
<div class="m" style="left:572px;top:1061px;color:#8000ff;">}</div>
<div class="m" style="left:572px;top:1145px;color:#008080;letter-spacing:2px;font-weight:bold;">/</div>
<svg style="position:absolute;left:592px;top:1140px;" width="40" height="42" viewBox="0 0 40 42"><defs><pattern id="ap79_592" width="20" height="42" patternUnits="userSpaceOnUse"><path d="M8 12h4v2h-4z M4 14h2v2h-2z M8 14h4v2h-4z M14 14h2v2h-2z M4 16h12v2h-12z M8 18h4v2h-4z M4 20h12v2h-12z M8 22h4v4h-4z" fill="#008080"/></pattern></defs><rect width="40" height="42" fill="url(#ap79_592)"/></svg>
<svg style="position:absolute;left:612px;top:1182px;" width="20" height="42" viewBox="0 0 20 42"><defs><pattern id="ap80_612" width="20" height="42" patternUnits="userSpaceOnUse"><path d="M8 12h4v2h-4z M4 14h2v2h-2z M8 14h4v2h-4z M14 14h2v2h-2z M4 16h12v2h-12z M8 18h4v2h-4z M4 20h12v2h-12z M8 22h4v4h-4z" fill="#008080"/></pattern></defs><rect width="20" height="42" fill="url(#ap80_612)"/></svg>
<div class="m" style="left:652px;top:1187px;color:#a0521e;">@}</div>
<svg style="position:absolute;left:612px;top:1224px;" width="20" height="42" viewBox="0 0 20 42"><defs><pattern id="ap81_612" width="20" height="42" patternUnits="userSpaceOnUse"><path d="M8 12h4v2h-4z M4 14h2v2h-2z M8 14h4v2h-4z M14 14h2v2h-2z M4 16h12v2h-12z M8 18h4v2h-4z M4 20h12v2h-12z M8 22h4v4h-4z" fill="#008080"/></pattern></defs><rect width="20" height="42" fill="url(#ap81_612)"/></svg>
<div class="m" style="left:632px;top:1229px;color:#008080;letter-spacing:2px;font-weight:bold;">/</div>
<div class="m" style="left:572px;top:1313px;color:#008080;letter-spacing:2px;font-weight:bold;">/</div>
<svg style="position:absolute;left:592px;top:1308px;" width="40" height="42" viewBox="0 0 40 42"><defs><pattern id="ap83_592" width="20" height="42" patternUnits="userSpaceOnUse"><path d="M8 12h4v2h-4z M4 14h2v2h-2z M8 14h4v2h-4z M14 14h2v2h-2z M4 16h12v2h-12z M8 18h4v2h-4z M4 20h12v2h-12z M8 22h4v4h-4z" fill="#008080"/></pattern></defs><rect width="40" height="42" fill="url(#ap83_592)"/></svg>
<svg style="position:absolute;left:612px;top:1350px;" width="20" height="42" viewBox="0 0 20 42"><defs><pattern id="ap84_612" width="20" height="42" patternUnits="userSpaceOnUse"><path d="M8 12h4v2h-4z M4 14h2v2h-2z M8 14h4v2h-4z M14 14h2v2h-2z M4 16h12v2h-12z M8 18h4v2h-4z M4 20h12v2h-12z M8 22h4v4h-4z" fill="#008080"/></pattern></defs><rect width="20" height="42" fill="url(#ap84_612)"/></svg>
<div class="m" style="left:652px;top:1355px;color:#a0521e;">@}</div>
<svg style="position:absolute;left:612px;top:1392px;" width="20" height="42" viewBox="0 0 20 42"><defs><pattern id="ap85_612" width="20" height="42" patternUnits="userSpaceOnUse"><path d="M8 12h4v2h-4z M4 14h2v2h-2z M8 14h4v2h-4z M14 14h2v2h-2z M4 16h12v2h-12z M8 18h4v2h-4z M4 20h12v2h-12z M8 22h4v4h-4z" fill="#008080"/></pattern></defs><rect width="20" height="42" fill="url(#ap85_612)"/></svg>
<div class="m" style="left:632px;top:1397px;color:#008080;letter-spacing:2px;font-weight:bold;">/</div>
<div class="m" style="left:572px;top:1481px;color:#008080;letter-spacing:2px;font-weight:bold;">/</div>
<svg style="position:absolute;left:592px;top:1476px;" width="40" height="42" viewBox="0 0 40 42"><defs><pattern id="ap87_592" width="20" height="42" patternUnits="userSpaceOnUse"><path d="M8 12h4v2h-4z M4 14h2v2h-2z M8 14h4v2h-4z M14 14h2v2h-2z M4 16h12v2h-12z M8 18h4v2h-4z M4 20h12v2h-12z M8 22h4v4h-4z" fill="#008080"/></pattern></defs><rect width="40" height="42" fill="url(#ap87_592)"/></svg>
<svg style="position:absolute;left:612px;top:1518px;" width="20" height="42" viewBox="0 0 20 42"><defs><pattern id="ap88_612" width="20" height="42" patternUnits="userSpaceOnUse"><path d="M8 12h4v2h-4z M4 14h2v2h-2z M8 14h4v2h-4z M14 14h2v2h-2z M4 16h12v2h-12z M8 18h4v2h-4z M4 20h12v2h-12z M8 22h4v4h-4z" fill="#008080"/></pattern></defs><rect width="20" height="42" fill="url(#ap88_612)"/></svg>
<div class="m" style="left:652px;top:1523px;color:#a0521e;">@}</div>
<svg style="position:absolute;left:612px;top:1560px;" width="20" height="42" viewBox="0 0 20 42"><defs><pattern id="ap89_612" width="20" height="42" patternUnits="userSpaceOnUse"><path d="M8 12h4v2h-4z M4 14h2v2h-2z M8 14h4v2h-4z M14 14h2v2h-2z M4 16h12v2h-12z M8 18h4v2h-4z M4 20h12v2h-12z M8 22h4v4h-4z" fill="#008080"/></pattern></defs><rect width="20" height="42" fill="url(#ap89_612)"/></svg>
<div class="m" style="left:632px;top:1565px;color:#008080;letter-spacing:2px;font-weight:bold;">/</div>
<div style="position:absolute;left:858px;top:848px;width:2px;height:38px;background:#000"></div>
<div style="position:absolute;left:556px;top:458px;width:2px;height:200px;background:#808080"></div>
<div style="position:absolute;left:556px;top:656px;width:12px;height:2px;background:#808080"></div>
<svg style="position:absolute;left:546px;top:436px;" width="22" height="22" viewBox="0 0 22 22"><rect x="1" y="1" width="20" height="20" fill="#f2f2f2" stroke="#808080" stroke-width="2"/><path d="M5 11 H17" stroke="#808080" stroke-width="2"/></svg>
<div style="position:absolute;left:556px;top:752px;width:2px;height:368px;background:#808080"></div>
<div style="position:absolute;left:556px;top:1118px;width:12px;height:2px;background:#808080"></div>
<svg style="position:absolute;left:546px;top:730px;" width="22" height="22" viewBox="0 0 22 22"><rect x="1" y="1" width="20" height="20" fill="#f2f2f2" stroke="#808080" stroke-width="2"/><path d="M5 11 H17" stroke="#808080" stroke-width="2"/></svg>
<div style="position:absolute;left:556px;top:1034px;width:12px;height:2px;background:#808080"></div>
<svg style="position:absolute;left:546px;top:982px;" width="22" height="22" viewBox="0 0 22 22"><rect x="1" y="1" width="20" height="20" fill="#f2f2f2" stroke="#808080" stroke-width="2"/><path d="M5 11 H17" stroke="#808080" stroke-width="2"/></svg>
<div style="position:absolute;left:556px;top:1172px;width:2px;height:116px;background:#808080"></div>
<div style="position:absolute;left:556px;top:1286px;width:12px;height:2px;background:#808080"></div>
<svg style="position:absolute;left:546px;top:1150px;" width="22" height="22" viewBox="0 0 22 22"><rect x="1" y="1" width="20" height="20" fill="#f2f2f2" stroke="#808080" stroke-width="2"/><path d="M5 11 H17" stroke="#808080" stroke-width="2"/></svg>
<div style="position:absolute;left:556px;top:1340px;width:2px;height:116px;background:#808080"></div>
<div style="position:absolute;left:556px;top:1454px;width:12px;height:2px;background:#808080"></div>
<svg style="position:absolute;left:546px;top:1318px;" width="22" height="22" viewBox="0 0 22 22"><rect x="1" y="1" width="20" height="20" fill="#f2f2f2" stroke="#808080" stroke-width="2"/><path d="M5 11 H17" stroke="#808080" stroke-width="2"/></svg>
<div style="position:absolute;left:556px;top:1508px;width:2px;height:66px;background:#808080"></div>
<svg style="position:absolute;left:546px;top:1486px;" width="22" height="22" viewBox="0 0 22 22"><rect x="1" y="1" width="20" height="20" fill="#f2f2f2" stroke="#808080" stroke-width="2"/><path d="M5 11 H17" stroke="#808080" stroke-width="2"/></svg>
<svg style="position:absolute;left:420px;top:258px;" width="124" height="1400" viewBox="0 0 124 1400"><path d="M86 12h12v2h-12zM86 14h2v2h-2zM86 16h2v2h-2zM86 18h2v2h-2zM86 20h8v2h-8zM86 22h2v2h-2zM94 22h2v2h-2zM96 24h2v2h-2zM96 26h2v2h-2zM86 28h2v2h-2zM96 28h2v2h-2zM86 30h2v2h-2zM94 30h2v2h-2zM88 32h6v2h-6zM104 12h8v2h-8zM102 14h2v2h-2zM112 14h2v2h-2zM102 16h2v2h-2zM112 16h2v2h-2zM102 18h2v2h-2zM112 18h2v2h-2zM104 20h2v2h-2zM110 20h2v2h-2zM106 22h4v2h-4zM104 24h2v2h-2zM110 24h2v2h-2zM102 26h2v2h-2zM112 26h2v2h-2zM102 28h2v2h-2zM112 28h2v2h-2zM102 30h2v2h-2zM112 30h2v2h-2zM104 32h8v2h-8zM86 54h12v2h-12zM86 56h2v2h-2zM86 58h2v2h-2zM86 60h2v2h-2zM86 62h8v2h-8zM86 64h2v2h-2zM94 64h2v2h-2zM96 66h2v2h-2zM96 68h2v2h-2zM86 70h2v2h-2zM96 70h2v2h-2zM86 72h2v2h-2zM94 72h2v2h-2zM88 74h6v2h-6zM104 54h6v2h-6zM102 56h2v2h-2zM110 56h2v2h-2zM102 58h2v2h-2zM112 58h2v2h-2zM102 60h2v2h-2zM112 60h2v2h-2zM102 62h2v2h-2zM112 62h2v2h-2zM102 64h2v2h-2zM110 64h4v2h-4zM104 66h6v2h-6zM112 66h2v2h-2zM112 68h2v2h-2zM112 70h2v2h-2zM104 72h2v2h-2zM110 72h2v2h-2zM106 74h4v2h-4zM90 96h4v2h-4zM88 98h2v2h-2zM94 98h2v2h-2zM86 100h2v2h-2zM86 102h2v2h-2zM86 104h2v2h-2zM90 104h6v2h-6zM86 106h4v2h-4zM96 106h2v2h-2zM86 108h2v2h-2zM96 108h2v2h-2zM86 110h2v2h-2zM96 110h2v2h-2zM86 112h2v2h-2zM96 112h2v2h-2zM88 114h2v2h-2zM96 114h2v2h-2zM90 116h6v2h-6zM106 96h4v2h-4zM104 98h2v2h-2zM110 98h2v2h-2zM102 100h2v2h-2zM112 100h2v2h-2zM102 102h2v2h-2zM112 102h2v2h-2zM102 104h2v2h-2zM112 104h2v2h-2zM102 106h2v2h-2zM112 106h2v2h-2zM102 108h2v2h-2zM112 108h2v2h-2zM102 110h2v2h-2zM112 110h2v2h-2zM102 112h2v2h-2zM112 112h2v2h-2zM104 114h2v2h-2zM110 114h2v2h-2zM106 116h4v2h-4zM90 138h4v2h-4zM88 140h2v2h-2zM94 140h2v2h-2zM86 142h2v2h-2zM86 144h2v2h-2zM86 146h2v2h-2zM90 146h6v2h-6zM86 148h4v2h-4zM96 148h2v2h-2zM86 150h2v2h-2zM96 150h2v2h-2zM86 152h2v2h-2zM96 152h2v2h-2zM86 154h2v2h-2zM96 154h2v2h-2zM88 156h2v2h-2zM96 156h2v2h-2zM90 158h6v2h-6zM108 138h2v2h-2zM104 140h6v2h-6zM108 142h2v2h-2zM108 144h2v2h-2zM108 146h2v2h-2zM108 148h2v2h-2zM108 150h2v2h-2zM108 152h2v2h-2zM108 154h2v2h-2zM108 156h2v2h-2zM104 158h10v2h-10zM90 180h4v2h-4zM88 182h2v2h-2zM94 182h2v2h-2zM86 184h2v2h-2zM86 186h2v2h-2zM86 188h2v2h-2zM90 188h6v2h-6zM86 190h4v2h-4zM96 190h2v2h-2zM86 192h2v2h-2zM96 192h2v2h-2zM86 194h2v2h-2zM96 194h2v2h-2zM86 196h2v2h-2zM96 196h2v2h-2zM88 198h2v2h-2zM96 198h2v2h-2zM90 200h6v2h-6zM102 180h12v2h-12zM102 182h2v2h-2zM112 182h2v2h-2zM102 184h2v2h-2zM112 184h2v2h-2zM102 186h2v2h-2zM112 186h2v2h-2zM112 188h2v2h-2zM110 190h2v2h-2zM108 192h2v2h-2zM106 194h2v2h-2zM104 196h2v2h-2zM102 198h2v2h-2zM112 198h2v2h-2zM102 200h12v2h-12zM90 222h4v2h-4zM88 224h2v2h-2zM94 224h2v2h-2zM86 226h2v2h-2zM86 228h2v2h-2zM86 230h2v2h-2zM90 230h6v2h-6zM86 232h4v2h-4zM96 232h2v2h-2zM86 234h2v2h-2zM96 234h2v2h-2zM86 236h2v2h-2zM96 236h2v2h-2zM86 238h2v2h-2zM96 238h2v2h-2zM88 240h2v2h-2zM96 240h2v2h-2zM90 242h6v2h-6zM104 222h8v2h-8zM102 224h2v2h-2zM112 224h2v2h-2zM102 226h2v2h-2zM112 226h2v2h-2zM112 228h2v2h-2zM112 230h2v2h-2zM106 232h6v2h-6zM112 234h2v2h-2zM112 236h2v2h-2zM102 238h2v2h-2zM112 238h2v2h-2zM102 240h2v2h-2zM112 240h2v2h-2zM104 242h8v2h-8zM90 264h4v2h-4zM88 266h2v2h-2zM94 266h2v2h-2zM86 268h2v2h-2zM86 270h2v2h-2zM86 272h2v2h-2zM90 272h6v2h-6zM86 274h4v2h-4zM96 274h2v2h-2zM86 276h2v2h-2zM96 276h2v2h-2zM86 278h2v2h-2zM96 278h2v2h-2zM86 280h2v2h-2zM96 280h2v2h-2zM88 282h2v2h-2zM96 282h2v2h-2zM90 284h6v2h-6zM110 264h2v2h-2zM108 266h4v2h-4zM108 268h4v2h-4zM106 270h2v2h-2zM110 270h2v2h-2zM106 272h2v2h-2zM110 272h2v2h-2zM104 274h2v2h-2zM110 274h2v2h-2zM102 276h2v2h-2zM110 276h2v2h-2zM102 278h14v2h-14zM110 280h2v2h-2zM110 282h2v2h-2zM106 284h10v2h-10zM90 306h4v2h-4zM88 308h2v2h-2zM94 308h2v2h-2zM86 310h2v2h-2zM86 312h2v2h-2zM86 314h2v2h-2zM90 314h6v2h-6zM86 316h4v2h-4zM96 316h2v2h-2zM86 318h2v2h-2zM96 318h2v2h-2zM86 320h2v2h-2zM96 320h2v2h-2zM86 322h2v2h-2zM96 322h2v2h-2zM88 324h2v2h-2zM96 324h2v2h-2zM90 326h6v2h-6zM102 306h12v2h-12zM102 308h2v2h-2zM102 310h2v2h-2zM102 312h2v2h-2zM102 314h8v2h-8zM102 316h2v2h-2zM110 316h2v2h-2zM112 318h2v2h-2zM112 320h2v2h-2zM102 322h2v2h-2zM112 322h2v2h-2zM102 324h2v2h-2zM110 324h2v2h-2zM104 326h6v2h-6zM90 348h4v2h-4zM88 350h2v2h-2zM94 350h2v2h-2zM86 352h2v2h-2zM86 354h2v2h-2zM86 356h2v2h-2zM90 356h6v2h-6zM86 358h4v2h-4zM96 358h2v2h-2zM86 360h2v2h-2zM96 360h2v2h-2zM86 362h2v2h-2zM96 362h2v2h-2zM86 364h2v2h-2zM96 364h2v2h-2zM88 366h2v2h-2zM96 366h2v2h-2zM90 368h6v2h-6zM106 348h4v2h-4zM104 350h2v2h-2zM110 350h2v2h-2zM102 352h2v2h-2zM102 354h2v2h-2zM102 356h2v2h-2zM106 356h6v2h-6zM102 358h4v2h-4zM112 358h2v2h-2zM102 360h2v2h-2zM112 360h2v2h-2zM102 362h2v2h-2zM112 362h2v2h-2zM102 364h2v2h-2zM112 364h2v2h-2zM104 366h2v2h-2zM112 366h2v2h-2zM106 368h6v2h-6zM90 390h4v2h-4zM88 392h2v2h-2zM94 392h2v2h-2zM86 394h2v2h-2zM86 396h2v2h-2zM86 398h2v2h-2zM90 398h6v2h-6zM86 400h4v2h-4zM96 400h2v2h-2zM86 402h2v2h-2zM96 402h2v2h-2zM86 404h2v2h-2zM96 404h2v2h-2zM86 406h2v2h-2zM96 406h2v2h-2zM88 408h2v2h-2zM96 408h2v2h-2zM90 410h6v2h-6zM102 390h12v2h-12zM102 392h2v2h-2zM112 392h2v2h-2zM110 394h2v2h-2zM110 396h2v2h-2zM108 398h2v2h-2zM108 400h2v2h-2zM106 402h2v2h-2zM106 404h2v2h-2zM106 406h2v2h-2zM106 408h2v2h-2zM106 410h2v2h-2zM90 432h4v2h-4zM88 434h2v2h-2zM94 434h2v2h-2zM86 436h2v2h-2zM86 438h2v2h-2zM86 440h2v2h-2zM90 440h6v2h-6zM86 442h4v2h-4zM96 442h2v2h-2zM86 444h2v2h-2zM96 444h2v2h-2zM86 446h2v2h-2zM96 446h2v2h-2zM86 448h2v2h-2zM96 448h2v2h-2zM88 450h2v2h-2zM96 450h2v2h-2zM90 452h6v2h-6zM104 432h8v2h-8zM102 434h2v2h-2zM112 434h2v2h-2zM102 436h2v2h-2zM112 436h2v2h-2zM102 438h2v2h-2zM112 438h2v2h-2zM104 440h2v2h-2zM110 440h2v2h-2zM106 442h4v2h-4zM104 444h2v2h-2zM110 444h2v2h-2zM102 446h2v2h-2zM112 446h2v2h-2zM102 448h2v2h-2zM112 448h2v2h-2zM102 450h2v2h-2zM112 450h2v2h-2zM104 452h8v2h-8zM90 474h4v2h-4zM88 476h2v2h-2zM94 476h2v2h-2zM86 478h2v2h-2zM86 480h2v2h-2zM86 482h2v2h-2zM90 482h6v2h-6zM86 484h4v2h-4zM96 484h2v2h-2zM86 486h2v2h-2zM96 486h2v2h-2zM86 488h2v2h-2zM96 488h2v2h-2zM86 490h2v2h-2zM96 490h2v2h-2zM88 492h2v2h-2zM96 492h2v2h-2zM90 494h6v2h-6zM104 474h6v2h-6zM102 476h2v2h-2zM110 476h2v2h-2zM102 478h2v2h-2zM112 478h2v2h-2zM102 480h2v2h-2zM112 480h2v2h-2zM102 482h2v2h-2zM112 482h2v2h-2zM102 484h2v2h-2zM110 484h4v2h-4zM104 486h6v2h-6zM112 486h2v2h-2zM112 488h2v2h-2zM112 490h2v2h-2zM104 492h2v2h-2zM110 492h2v2h-2zM106 494h4v2h-4zM86 516h12v2h-12zM86 518h2v2h-2zM96 518h2v2h-2zM94 520h2v2h-2zM94 522h2v2h-2zM92 524h2v2h-2zM92 526h2v2h-2zM90 528h2v2h-2zM90 530h2v2h-2zM90 532h2v2h-2zM90 534h2v2h-2zM90 536h2v2h-2zM106 516h4v2h-4zM104 518h2v2h-2zM110 518h2v2h-2zM102 520h2v2h-2zM112 520h2v2h-2zM102 522h2v2h-2zM112 522h2v2h-2zM102 524h2v2h-2zM112 524h2v2h-2zM102 526h2v2h-2zM112 526h2v2h-2zM102 528h2v2h-2zM112 528h2v2h-2zM102 530h2v2h-2zM112 530h2v2h-2zM102 532h2v2h-2zM112 532h2v2h-2zM104 534h2v2h-2zM110 534h2v2h-2zM106 536h4v2h-4zM86 558h12v2h-12zM86 560h2v2h-2zM96 560h2v2h-2zM94 562h2v2h-2zM94 564h2v2h-2zM92 566h2v2h-2zM92 568h2v2h-2zM90 570h2v2h-2zM90 572h2v2h-2zM90 574h2v2h-2zM90 576h2v2h-2zM90 578h2v2h-2zM108 558h2v2h-2zM104 560h6v2h-6zM108 562h2v2h-2zM108 564h2v2h-2zM108 566h2v2h-2zM108 568h2v2h-2zM108 570h2v2h-2zM108 572h2v2h-2zM108 574h2v2h-2zM108 576h2v2h-2zM104 578h10v2h-10zM86 600h12v2h-12zM86 602h2v2h-2zM96 602h2v2h-2zM94 604h2v2h-2zM94 606h2v2h-2zM92 608h2v2h-2zM92 610h2v2h-2zM90 612h2v2h-2zM90 614h2v2h-2zM90 616h2v2h-2zM90 618h2v2h-2zM90 620h2v2h-2zM102 600h12v2h-12zM102 602h2v2h-2zM112 602h2v2h-2zM102 604h2v2h-2zM112 604h2v2h-2zM102 606h2v2h-2zM112 606h2v2h-2zM112 608h2v2h-2zM110 610h2v2h-2zM108 612h2v2h-2zM106 614h2v2h-2zM104 616h2v2h-2zM102 618h2v2h-2zM112 618h2v2h-2zM102 620h12v2h-12zM86 642h12v2h-12zM86 644h2v2h-2zM96 644h2v2h-2zM94 646h2v2h-2zM94 648h2v2h-2zM92 650h2v2h-2zM92 652h2v2h-2zM90 654h2v2h-2zM90 656h2v2h-2zM90 658h2v2h-2zM90 660h2v2h-2zM90 662h2v2h-2zM104 642h8v2h-8zM102 644h2v2h-2zM112 644h2v2h-2zM102 646h2v2h-2zM112 646h2v2h-2zM112 648h2v2h-2zM112 650h2v2h-2zM106 652h6v2h-6zM112 654h2v2h-2zM112 656h2v2h-2zM102 658h2v2h-2zM112 658h2v2h-2zM102 660h2v2h-2zM112 660h2v2h-2zM104 662h8v2h-8zM86 684h12v2h-12zM86 686h2v2h-2zM96 686h2v2h-2zM94 688h2v2h-2zM94 690h2v2h-2zM92 692h2v2h-2zM92 694h2v2h-2zM90 696h2v2h-2zM90 698h2v2h-2zM90 700h2v2h-2zM90 702h2v2h-2zM90 704h2v2h-2zM110 684h2v2h-2zM108 686h4v2h-4zM108 688h4v2h-4zM106 690h2v2h-2zM110 690h2v2h-2zM106 692h2v2h-2zM110 692h2v2h-2zM104 694h2v2h-2zM110 694h2v2h-2zM102 696h2v2h-2zM110 696h2v2h-2zM102 698h14v2h-14zM110 700h2v2h-2zM110 702h2v2h-2zM106 704h10v2h-10zM86 726h12v2h-12zM86 728h2v2h-2zM96 728h2v2h-2zM94 730h2v2h-2zM94 732h2v2h-2zM92 734h2v2h-2zM92 736h2v2h-2zM90 738h2v2h-2zM90 740h2v2h-2zM90 742h2v2h-2zM90 744h2v2h-2zM90 746h2v2h-2zM102 726h12v2h-12zM102 728h2v2h-2zM102 730h2v2h-2zM102 732h2v2h-2zM102 734h8v2h-8zM102 736h2v2h-2zM110 736h2v2h-2zM112 738h2v2h-2zM112 740h2v2h-2zM102 742h2v2h-2zM112 742h2v2h-2zM102 744h2v2h-2zM110 744h2v2h-2zM104 746h6v2h-6zM86 768h12v2h-12zM86 770h2v2h-2zM96 770h2v2h-2zM94 772h2v2h-2zM94 774h2v2h-2zM92 776h2v2h-2zM92 778h2v2h-2zM90 780h2v2h-2zM90 782h2v2h-2zM90 784h2v2h-2zM90 786h2v2h-2zM90 788h2v2h-2zM106 768h4v2h-4zM104 770h2v2h-2zM110 770h2v2h-2zM102 772h2v2h-2zM102 774h2v2h-2zM102 776h2v2h-2zM106 776h6v2h-6zM102 778h4v2h-4zM112 778h2v2h-2zM102 780h2v2h-2zM112 780h2v2h-2zM102 782h2v2h-2zM112 782h2v2h-2zM102 784h2v2h-2zM112 784h2v2h-2zM104 786h2v2h-2zM112 786h2v2h-2zM106 788h6v2h-6zM86 810h12v2h-12zM86 812h2v2h-2zM96 812h2v2h-2zM94 814h2v2h-2zM94 816h2v2h-2zM92 818h2v2h-2zM92 820h2v2h-2zM90 822h2v2h-2zM90 824h2v2h-2zM90 826h2v2h-2zM90 828h2v2h-2zM90 830h2v2h-2zM102 810h12v2h-12zM102 812h2v2h-2zM112 812h2v2h-2zM110 814h2v2h-2zM110 816h2v2h-2zM108 818h2v2h-2zM108 820h2v2h-2zM106 822h2v2h-2zM106 824h2v2h-2zM106 826h2v2h-2zM106 828h2v2h-2zM106 830h2v2h-2zM86 852h12v2h-12zM86 854h2v2h-2zM96 854h2v2h-2zM94 856h2v2h-2zM94 858h2v2h-2zM92 860h2v2h-2zM92 862h2v2h-2zM90 864h2v2h-2zM90 866h2v2h-2zM90 868h2v2h-2zM90 870h2v2h-2zM90 872h2v2h-2zM104 852h8v2h-8zM102 854h2v2h-2zM112 854h2v2h-2zM102 856h2v2h-2zM112 856h2v2h-2zM102 858h2v2h-2zM112 858h2v2h-2zM104 860h2v2h-2zM110 860h2v2h-2zM106 862h4v2h-4zM104 864h2v2h-2zM110 864h2v2h-2zM102 866h2v2h-2zM112 866h2v2h-2zM102 868h2v2h-2zM112 868h2v2h-2zM102 870h2v2h-2zM112 870h2v2h-2zM104 872h8v2h-8zM86 894h12v2h-12zM86 896h2v2h-2zM96 896h2v2h-2zM94 898h2v2h-2zM94 900h2v2h-2zM92 902h2v2h-2zM92 904h2v2h-2zM90 906h2v2h-2zM90 908h2v2h-2zM90 910h2v2h-2zM90 912h2v2h-2zM90 914h2v2h-2zM104 894h6v2h-6zM102 896h2v2h-2zM110 896h2v2h-2zM102 898h2v2h-2zM112 898h2v2h-2zM102 900h2v2h-2zM112 900h2v2h-2zM102 902h2v2h-2zM112 902h2v2h-2zM102 904h2v2h-2zM110 904h4v2h-4zM104 906h6v2h-6zM112 906h2v2h-2zM112 908h2v2h-2zM112 910h2v2h-2zM104 912h2v2h-2zM110 912h2v2h-2zM106 914h4v2h-4zM88 936h8v2h-8zM86 938h2v2h-2zM96 938h2v2h-2zM86 940h2v2h-2zM96 940h2v2h-2zM86 942h2v2h-2zM96 942h2v2h-2zM88 944h2v2h-2zM94 944h2v2h-2zM90 946h4v2h-4zM88 948h2v2h-2zM94 948h2v2h-2zM86 950h2v2h-2zM96 950h2v2h-2zM86 952h2v2h-2zM96 952h2v2h-2zM86 954h2v2h-2zM96 954h2v2h-2zM88 956h8v2h-8zM106 936h4v2h-4zM104 938h2v2h-2zM110 938h2v2h-2zM102 940h2v2h-2zM112 940h2v2h-2zM102 942h2v2h-2zM112 942h2v2h-2zM102 944h2v2h-2zM112 944h2v2h-2zM102 946h2v2h-2zM112 946h2v2h-2zM102 948h2v2h-2zM112 948h2v2h-2zM102 950h2v2h-2zM112 950h2v2h-2zM102 952h2v2h-2zM112 952h2v2h-2zM104 954h2v2h-2zM110 954h2v2h-2zM106 956h4v2h-4zM88 978h8v2h-8zM86 980h2v2h-2zM96 980h2v2h-2zM86 982h2v2h-2zM96 982h2v2h-2zM86 984h2v2h-2zM96 984h2v2h-2zM88 986h2v2h-2zM94 986h2v2h-2zM90 988h4v2h-4zM88 990h2v2h-2zM94 990h2v2h-2zM86 992h2v2h-2zM96 992h2v2h-2zM86 994h2v2h-2zM96 994h2v2h-2zM86 996h2v2h-2zM96 996h2v2h-2zM88 998h8v2h-8zM108 978h2v2h-2zM104 980h6v2h-6zM108 982h2v2h-2zM108 984h2v2h-2zM108 986h2v2h-2zM108 988h2v2h-2zM108 990h2v2h-2zM108 992h2v2h-2zM108 994h2v2h-2zM108 996h2v2h-2zM104 998h10v2h-10zM88 1020h8v2h-8zM86 1022h2v2h-2zM96 1022h2v2h-2zM86 1024h2v2h-2zM96 1024h2v2h-2zM86 1026h2v2h-2zM96 1026h2v2h-2zM88 1028h2v2h-2zM94 1028h2v2h-2zM90 1030h4v2h-4zM88 1032h2v2h-2zM94 1032h2v2h-2zM86 1034h2v2h-2zM96 1034h2v2h-2zM86 1036h2v2h-2zM96 1036h2v2h-2zM86 1038h2v2h-2zM96 1038h2v2h-2zM88 1040h8v2h-8zM102 1020h12v2h-12zM102 1022h2v2h-2zM112 1022h2v2h-2zM102 1024h2v2h-2zM112 1024h2v2h-2zM102 1026h2v2h-2zM112 1026h2v2h-2zM112 1028h2v2h-2zM110 1030h2v2h-2zM108 1032h2v2h-2zM106 1034h2v2h-2zM104 1036h2v2h-2zM102 1038h2v2h-2zM112 1038h2v2h-2zM102 1040h12v2h-12zM88 1062h8v2h-8zM86 1064h2v2h-2zM96 1064h2v2h-2zM86 1066h2v2h-2zM96 1066h2v2h-2zM86 1068h2v2h-2zM96 1068h2v2h-2zM88 1070h2v2h-2zM94 1070h2v2h-2zM90 1072h4v2h-4zM88 1074h2v2h-2zM94 1074h2v2h-2zM86 1076h2v2h-2zM96 1076h2v2h-2zM86 1078h2v2h-2zM96 1078h2v2h-2zM86 1080h2v2h-2zM96 1080h2v2h-2zM88 1082h8v2h-8zM104 1062h8v2h-8zM102 1064h2v2h-2zM112 1064h2v2h-2zM102 1066h2v2h-2zM112 1066h2v2h-2zM112 1068h2v2h-2zM112 1070h2v2h-2zM106 1072h6v2h-6zM112 1074h2v2h-2zM112 1076h2v2h-2zM102 1078h2v2h-2zM112 1078h2v2h-2zM102 1080h2v2h-2zM112 1080h2v2h-2zM104 1082h8v2h-8zM88 1104h8v2h-8zM86 1106h2v2h-2zM96 1106h2v2h-2zM86 1108h2v2h-2zM96 1108h2v2h-2zM86 1110h2v2h-2zM96 1110h2v2h-2zM88 1112h2v2h-2zM94 1112h2v2h-2zM90 1114h4v2h-4zM88 1116h2v2h-2zM94 1116h2v2h-2zM86 1118h2v2h-2zM96 1118h2v2h-2zM86 1120h2v2h-2zM96 1120h2v2h-2zM86 1122h2v2h-2zM96 1122h2v2h-2zM88 1124h8v2h-8zM110 1104h2v2h-2zM108 1106h4v2h-4zM108 1108h4v2h-4zM106 1110h2v2h-2zM110 1110h2v2h-2zM106 1112h2v2h-2zM110 1112h2v2h-2zM104 1114h2v2h-2zM110 1114h2v2h-2zM102 1116h2v2h-2zM110 1116h2v2h-2zM102 1118h14v2h-14zM110 1120h2v2h-2zM110 1122h2v2h-2zM106 1124h10v2h-10zM88 1146h8v2h-8zM86 1148h2v2h-2zM96 1148h2v2h-2zM86 1150h2v2h-2zM96 1150h2v2h-2zM86 1152h2v2h-2zM96 1152h2v2h-2zM88 1154h2v2h-2zM94 1154h2v2h-2zM90 1156h4v2h-4zM88 1158h2v2h-2zM94 1158h2v2h-2zM86 1160h2v2h-2zM96 1160h2v2h-2zM86 1162h2v2h-2zM96 1162h2v2h-2zM86 1164h2v2h-2zM96 1164h2v2h-2zM88 1166h8v2h-8zM102 1146h12v2h-12zM102 1148h2v2h-2zM102 1150h2v2h-2zM102 1152h2v2h-2zM102 1154h8v2h-8zM102 1156h2v2h-2zM110 1156h2v2h-2zM112 1158h2v2h-2zM112 1160h2v2h-2zM102 1162h2v2h-2zM112 1162h2v2h-2zM102 1164h2v2h-2zM110 1164h2v2h-2zM104 1166h6v2h-6zM88 1188h8v2h-8zM86 1190h2v2h-2zM96 1190h2v2h-2zM86 1192h2v2h-2zM96 1192h2v2h-2zM86 1194h2v2h-2zM96 1194h2v2h-2zM88 1196h2v2h-2zM94 1196h2v2h-2zM90 1198h4v2h-4zM88 1200h2v2h-2zM94 1200h2v2h-2zM86 1202h2v2h-2zM96 1202h2v2h-2zM86 1204h2v2h-2zM96 1204h2v2h-2zM86 1206h2v2h-2zM96 1206h2v2h-2zM88 1208h8v2h-8zM106 1188h4v2h-4zM104 1190h2v2h-2zM110 1190h2v2h-2zM102 1192h2v2h-2zM102 1194h2v2h-2zM102 1196h2v2h-2zM106 1196h6v2h-6zM102 1198h4v2h-4zM112 1198h2v2h-2zM102 1200h2v2h-2zM112 1200h2v2h-2zM102 1202h2v2h-2zM112 1202h2v2h-2zM102 1204h2v2h-2zM112 1204h2v2h-2zM104 1206h2v2h-2zM112 1206h2v2h-2zM106 1208h6v2h-6zM88 1230h8v2h-8zM86 1232h2v2h-2zM96 1232h2v2h-2zM86 1234h2v2h-2zM96 1234h2v2h-2zM86 1236h2v2h-2zM96 1236h2v2h-2zM88 1238h2v2h-2zM94 1238h2v2h-2zM90 1240h4v2h-4zM88 1242h2v2h-2zM94 1242h2v2h-2zM86 1244h2v2h-2zM96 1244h2v2h-2zM86 1246h2v2h-2zM96 1246h2v2h-2zM86 1248h2v2h-2zM96 1248h2v2h-2zM88 1250h8v2h-8zM102 1230h12v2h-12zM102 1232h2v2h-2zM112 1232h2v2h-2zM110 1234h2v2h-2zM110 1236h2v2h-2zM108 1238h2v2h-2zM108 1240h2v2h-2zM106 1242h2v2h-2zM106 1244h2v2h-2zM106 1246h2v2h-2zM106 1248h2v2h-2zM106 1250h2v2h-2zM88 1272h8v2h-8zM86 1274h2v2h-2zM96 1274h2v2h-2zM86 1276h2v2h-2zM96 1276h2v2h-2zM86 1278h2v2h-2zM96 1278h2v2h-2zM88 1280h2v2h-2zM94 1280h2v2h-2zM90 1282h4v2h-4zM88 1284h2v2h-2zM94 1284h2v2h-2zM86 1286h2v2h-2zM96 1286h2v2h-2zM86 1288h2v2h-2zM96 1288h2v2h-2zM86 1290h2v2h-2zM96 1290h2v2h-2zM88 1292h8v2h-8zM104 1272h8v2h-8zM102 1274h2v2h-2zM112 1274h2v2h-2zM102 1276h2v2h-2zM112 1276h2v2h-2zM102 1278h2v2h-2zM112 1278h2v2h-2zM104 1280h2v2h-2zM110 1280h2v2h-2zM106 1282h4v2h-4zM104 1284h2v2h-2zM110 1284h2v2h-2zM102 1286h2v2h-2zM112 1286h2v2h-2zM102 1288h2v2h-2zM112 1288h2v2h-2zM102 1290h2v2h-2zM112 1290h2v2h-2zM104 1292h8v2h-8zM88 1314h8v2h-8zM86 1316h2v2h-2zM96 1316h2v2h-2zM86 1318h2v2h-2zM96 1318h2v2h-2zM86 1320h2v2h-2zM96 1320h2v2h-2zM88 1322h2v2h-2zM94 1322h2v2h-2zM90 1324h4v2h-4zM88 1326h2v2h-2zM94 1326h2v2h-2zM86 1328h2v2h-2zM96 1328h2v2h-2zM86 1330h2v2h-2zM96 1330h2v2h-2zM86 1332h2v2h-2zM96 1332h2v2h-2zM88 1334h8v2h-8zM104 1314h6v2h-6zM102 1316h2v2h-2zM110 1316h2v2h-2zM102 1318h2v2h-2zM112 1318h2v2h-2zM102 1320h2v2h-2zM112 1320h2v2h-2zM102 1322h2v2h-2zM112 1322h2v2h-2zM102 1324h2v2h-2zM110 1324h4v2h-4zM104 1326h6v2h-6zM112 1326h2v2h-2zM112 1328h2v2h-2zM112 1330h2v2h-2zM104 1332h2v2h-2zM110 1332h2v2h-2zM106 1334h4v2h-4z" fill="#000"/></svg>
</div>
<div style="position:absolute;left:0px;top:1618px;width:3200px;height:8px;background:#fff"></div>
<div style="position:absolute;left:0;top:1626px;width:3200px;height:37px;background:linear-gradient(#bccadb,#d5e1ee)"></div>
<div class="t" style="left:6.02px;top:1632.85px;font-size:23.8px;color:#000;font-weight:normal;transform:scaleX(1.0388);transform-origin:0 0;">Build Output</div>
<svg style="position:absolute;left:3135px;top:1638px;" width="14" height="16" viewBox="0 0 14 16"><path d="M2 0 H12 V10 H2 Z M4 2 V10 H6 V2 Z" fill="#000" fill-rule="evenodd"/><rect x="0" y="10" width="14" height="2" fill="#000"/><rect x="6" y="12" width="2" height="4" fill="#000"/></svg>
<div style="position:absolute;left:3167px;top:1634px;width:25px;height:24px;background:#c75050"></div>
<svg style="position:absolute;left:3168px;top:1634px;" width="24" height="24" viewBox="0 0 24 24"><path d="M6 6 H10 V8 H14 V6 H18 V8 H16 V10 H14 V14 H16 V16 H18 V18 H14 V16 H10 V18 H6 V16 H8 V14 H10 V10 H8 V8 H6 Z" fill="#fff"/></svg>
<div style="position:absolute;left:0px;top:1663px;width:3200px;height:4px;background:#f4f6f9"></div>
<div style="position:absolute;left:0px;top:1667px;width:3198px;height:3px;background:#7a7a7a"></div>
<div style="position:absolute;left:0px;top:1667px;width:4px;height:214px;background:#858585"></div>
<div style="position:absolute;left:4px;top:1670px;width:3160px;height:175px;background:#fff"></div>
<div style="position:absolute;left:3164px;top:1670px;width:32px;height:175px;background:#f0f0f0"></div>
<svg style="position:absolute;left:3173px;top:1682px;" width="14" height="12" viewBox="0 0 14 12"><polygon points="0,12 0,6.0 7.0,0 14,6.0 14,12 7.0,6.0" fill="#c0c0c0"/></svg>
<svg style="position:absolute;left:3173px;top:1821px;" width="14" height="12" viewBox="0 0 14 12"><polygon points="0,0 7.0,6.0 14,0 14,6.0 7.0,12 0,6.0" fill="#c0c0c0"/></svg>
<div style="position:absolute;left:4px;top:1845px;width:3192px;height:33px;background:#f0f0f0"></div>
<svg style="position:absolute;left:14px;top:1855px;" width="12" height="14" viewBox="0 0 12 14"><polygon points="6.0,0 12,0 6.0,7.0 12,14 6.0,14 0,7.0" fill="#c0c0c0"/></svg>
<svg style="position:absolute;left:3139px;top:1855px;" width="12" height="14" viewBox="0 0 12 14"><polygon points="0,0 6.0,0 12,7.0 6.0,14 0,14 6.0,7.0" fill="#c0c0c0"/></svg>
<div style="position:absolute;left:3196px;top:1667px;width:4px;height:214px;background:#e0e0e0"></div>
<div style="position:absolute;left:4px;top:1878px;width:3196px;height:3px;background:#fff"></div>
<div style="position:absolute;left:0px;top:1881px;width:3200px;height:39px;background:#f0f0f0;border-top:2px solid #dcdcdc"></div>
<div style="position:absolute;left:2085px;top:1886px;width:2px;height:34px;background:#d0d0d0"></div>
<div style="position:absolute;left:2440px;top:1886px;width:2px;height:34px;background:#d0d0d0"></div>
<div style="position:absolute;left:2714px;top:1886px;width:2px;height:34px;background:#d0d0d0"></div>
<div style="position:absolute;left:2900px;top:1886px;width:2px;height:34px;background:#d0d0d0"></div>
<div style="position:absolute;left:2953px;top:1886px;width:2px;height:34px;background:#d0d0d0"></div>
<div style="position:absolute;left:3017px;top:1886px;width:2px;height:34px;background:#d0d0d0"></div>
<div style="position:absolute;left:3079px;top:1886px;width:2px;height:34px;background:#d0d0d0"></div>
<div style="position:absolute;left:3137px;top:1886px;width:2px;height:34px;background:#d0d0d0"></div>
<div class="t" style="left:2093.5px;top:1891.35px;font-size:23.8px;color:#000;font-weight:normal;transform:scaleX(0.9236);transform-origin:0 0;">CMSIS-DAP Debugger</div>
<div class="t" style="left:2722.31px;top:1891.35px;font-size:23.8px;color:#000;font-weight:normal;transform:scaleX(0.8882);transform-origin:0 0;">L:72 C:17</div>
<div class="t" style="left:2909.0px;top:1891.35px;font-size:23.8px;color:#a0a0a0;font-weight:normal;transform:scaleX(0.8382);transform-origin:0 0;">CAP</div>
<div class="t" style="left:2961.08px;top:1891.35px;font-size:23.8px;color:#000;font-weight:normal;transform:scaleX(1.0108);transform-origin:0 0;">NUM</div>
<div class="t" style="left:3026.17px;top:1891.35px;font-size:23.8px;color:#a0a0a0;font-weight:normal;transform:scaleX(0.7706);transform-origin:0 0;">SCRL</div>
<div class="t" style="left:3088.04px;top:1891.35px;font-size:23.8px;color:#a0a0a0;font-weight:normal;transform:scaleX(0.9009);transform-origin:0 0;">OVR</div>
<div class="t" style="left:3143.77px;top:1891.35px;font-size:23.8px;color:#a0a0a0;font-weight:normal;transform:scaleX(1.0138);transform-origin:0 0;">R/W</div>
</div></body></html>
